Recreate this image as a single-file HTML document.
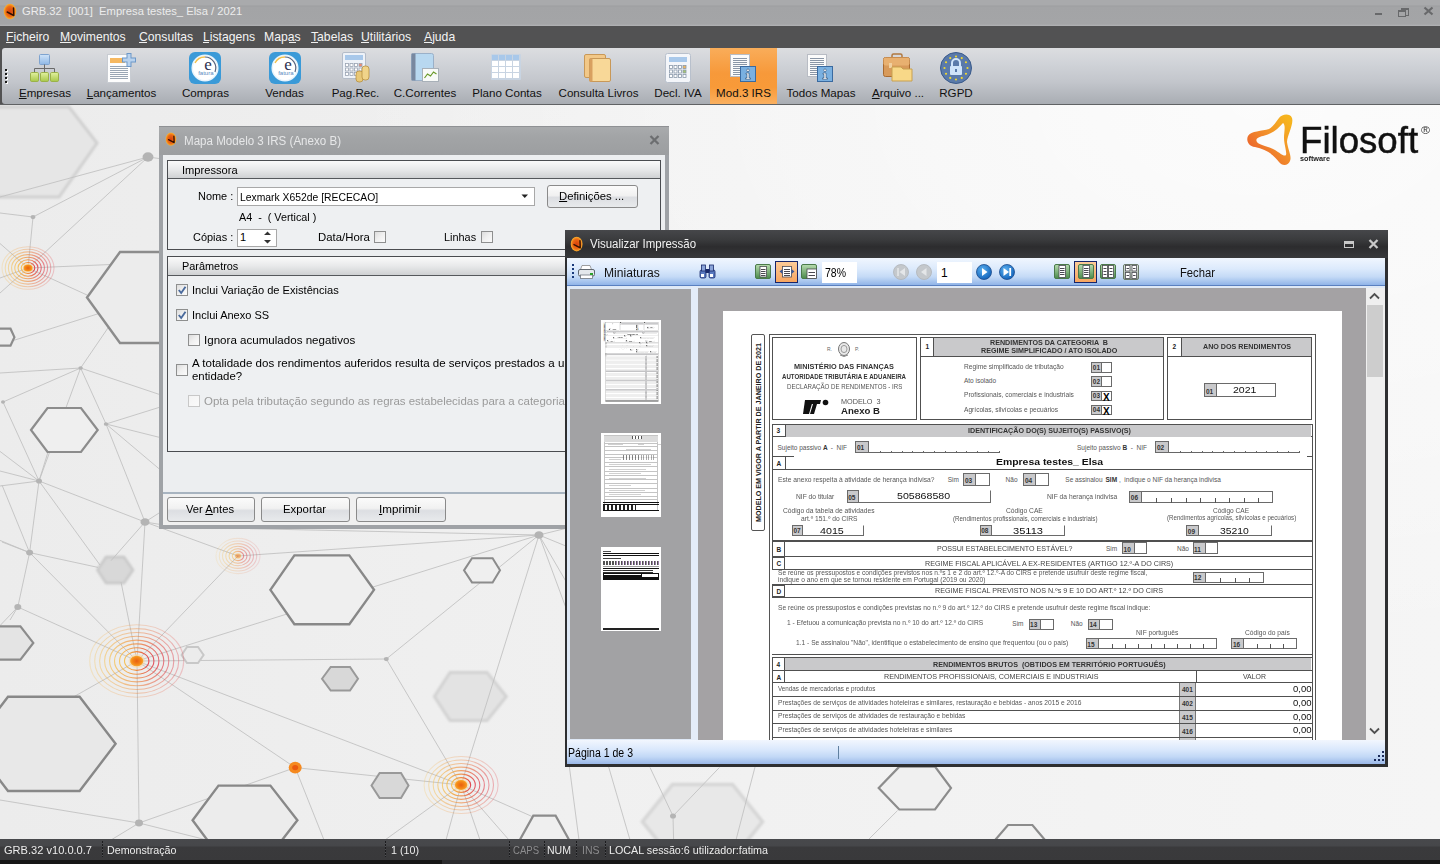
<!DOCTYPE html>
<html><head><meta charset="utf-8"><title>GRB.32</title><style>
*{margin:0;padding:0;box-sizing:content-box}
html,body{width:1440px;height:864px;overflow:hidden;background:#f0f0f0;font-family:"Liberation Sans",sans-serif;}
.t{position:absolute;white-space:nowrap;font-family:"Liberation Sans",sans-serif;}
.tl{font-size:11.6px;line-height:12px;color:#111;text-align:center;}
u{text-decoration:underline;text-underline-offset:1px;}
</style></head>
<body>
<svg style="position:absolute;left:0;top:105px" width="1440" height="734" viewBox="0 105 1440 734">
<defs><linearGradient id="dbg" x1="0" y1="0" x2="1" y2="0"><stop offset="0" stop-color="#ececec"/><stop offset="0.4" stop-color="#f0f0f0"/><stop offset="1" stop-color="#f5f5f5"/></linearGradient><radialGradient id="dhl" cx="0.85" cy="0" r="0.75" gradientTransform="translate(0.15,0) scale(0.85,1)"><stop offset="0" stop-color="#ffffff" stop-opacity="0.7"/><stop offset="0.6" stop-color="#ffffff" stop-opacity="0.3"/><stop offset="1" stop-color="#ffffff" stop-opacity="0"/></radialGradient><linearGradient id="pg" x1="0" y1="0" x2="1" y2="0"><stop offset="0" stop-color="#f6c050"/><stop offset="0.45" stop-color="#f08a30"/><stop offset="1" stop-color="#e03a48"/></linearGradient><radialGradient id="pd"><stop offset="0" stop-color="#e86010"/><stop offset="0.7" stop-color="#f58a18"/><stop offset="1" stop-color="#f8a830"/></radialGradient><filter id="bl" x="-20%" y="-20%" width="140%" height="140%"><feGaussianBlur stdDeviation="1.3"/></filter></defs>
<rect x="0" y="105" width="1440" height="734" fill="url(#dbg)"/><rect x="0" y="105" width="1440" height="734" fill="url(#dhl)"/>
<path d="M-60,152 L-30,107 L69,107 L97,143 L59,197 L-30,197 Z" fill="#e6e6e6" stroke="#d0d0d0" stroke-width="3" filter="url(#bl)"/>
<path d="M97.5,570.0 L106,557 L124,557 L133,570.0 L124,583 L106,583 Z" fill="#d8d8d8" stroke="#c8c8c8" stroke-width="2.5" filter="url(#bl)"/>
<path d="M434.4,696.5 L450,672.4 L487,672.4 L506.3,696.5 L487,720.6 L450,720.6 Z" fill="#e3e3e3" stroke="#d2d2d2" stroke-width="3" filter="url(#bl)"/>
<path d="M642.5,821.7 L672.5,784.4 L732.5,784.4 L762.5,821.7 L732.5,859 L672.5,859 Z" fill="#e8e8e8" stroke="#d6d6d6" stroke-width="3.5" filter="url(#bl)"/>
<line x1="148" y1="157" x2="0" y2="197" stroke="#c2c2c2" stroke-width="0.9"/>
<line x1="148" y1="157" x2="33" y2="217" stroke="#c2c2c2" stroke-width="0.9"/>
<line x1="148" y1="157" x2="28" y2="268" stroke="#c2c2c2" stroke-width="0.9"/>
<line x1="148" y1="157" x2="170" y2="160" stroke="#c2c2c2" stroke-width="0.9"/>
<line x1="0" y1="213" x2="33" y2="217" stroke="#c2c2c2" stroke-width="0.9"/>
<line x1="33" y1="217" x2="28" y2="268" stroke="#c2c2c2" stroke-width="0.9"/>
<line x1="28" y1="268" x2="0" y2="243.5" stroke="#c2c2c2" stroke-width="0.9"/>
<line x1="28" y1="268" x2="0" y2="278" stroke="#c2c2c2" stroke-width="0.9"/>
<line x1="28" y1="268" x2="0" y2="293" stroke="#c2c2c2" stroke-width="0.9"/>
<line x1="28" y1="268" x2="170" y2="262" stroke="#c2c2c2" stroke-width="0.9"/>
<line x1="28" y1="268" x2="87" y2="295" stroke="#c2c2c2" stroke-width="0.9"/>
<line x1="0" y1="344.7" x2="110" y2="310" stroke="#c2c2c2" stroke-width="0.9"/>
<line x1="80.6" y1="368" x2="0" y2="373" stroke="#c2c2c2" stroke-width="0.9"/>
<line x1="3" y1="402" x2="80.6" y2="368" stroke="#c2c2c2" stroke-width="0.9"/>
<line x1="80.6" y1="368" x2="110" y2="325" stroke="#c2c2c2" stroke-width="0.9"/>
<line x1="80.6" y1="368" x2="106" y2="424" stroke="#c2c2c2" stroke-width="0.9"/>
<line x1="80.6" y1="368" x2="39" y2="481" stroke="#c2c2c2" stroke-width="0.9"/>
<line x1="80.6" y1="368" x2="170" y2="398" stroke="#c2c2c2" stroke-width="0.9"/>
<line x1="106" y1="424" x2="170" y2="404" stroke="#c2c2c2" stroke-width="0.9"/>
<line x1="106" y1="424" x2="170" y2="440" stroke="#c2c2c2" stroke-width="0.9"/>
<line x1="106" y1="424" x2="170" y2="478" stroke="#c2c2c2" stroke-width="0.9"/>
<line x1="106" y1="424" x2="145" y2="522" stroke="#c2c2c2" stroke-width="0.9"/>
<line x1="3" y1="402" x2="39" y2="481" stroke="#c2c2c2" stroke-width="0.9"/>
<line x1="39" y1="481" x2="0" y2="451.4" stroke="#c2c2c2" stroke-width="0.9"/>
<line x1="39" y1="481" x2="0" y2="471" stroke="#c2c2c2" stroke-width="0.9"/>
<line x1="39" y1="481" x2="0" y2="486" stroke="#c2c2c2" stroke-width="0.9"/>
<line x1="39" y1="481" x2="48" y2="452" stroke="#c2c2c2" stroke-width="0.9"/>
<line x1="39" y1="481" x2="145" y2="522" stroke="#c2c2c2" stroke-width="0.9"/>
<line x1="39" y1="481" x2="100" y2="565" stroke="#c2c2c2" stroke-width="0.9"/>
<line x1="121" y1="582" x2="137" y2="661" stroke="#c2c2c2" stroke-width="0.9"/>
<line x1="17.8" y1="607" x2="10" y2="620" stroke="#c2c2c2" stroke-width="0.9"/>
<line x1="145" y1="522" x2="170" y2="506" stroke="#c2c2c2" stroke-width="0.9"/>
<line x1="145" y1="522" x2="170" y2="526" stroke="#c2c2c2" stroke-width="0.9"/>
<line x1="145" y1="522" x2="137" y2="661" stroke="#c2c2c2" stroke-width="0.9"/>
<line x1="145" y1="522" x2="111" y2="560.7" stroke="#c2c2c2" stroke-width="0.9"/>
<line x1="29.6" y1="552.6" x2="0" y2="540.4" stroke="#c2c2c2" stroke-width="0.9"/>
<line x1="39" y1="481" x2="29.6" y2="552.6" stroke="#c2c2c2" stroke-width="0.9"/>
<line x1="2" y1="485" x2="29.6" y2="552.6" stroke="#c2c2c2" stroke-width="0.9"/>
<line x1="2" y1="542" x2="29.6" y2="552.6" stroke="#c2c2c2" stroke-width="0.9"/>
<line x1="29.6" y1="552.6" x2="98" y2="567.4" stroke="#c2c2c2" stroke-width="0.9"/>
<line x1="29.6" y1="552.6" x2="17.8" y2="607" stroke="#c2c2c2" stroke-width="0.9"/>
<line x1="29.6" y1="552.6" x2="137" y2="661" stroke="#c2c2c2" stroke-width="0.9"/>
<line x1="17.8" y1="607" x2="0" y2="625.6" stroke="#c2c2c2" stroke-width="0.9"/>
<line x1="17.8" y1="607" x2="137" y2="661" stroke="#c2c2c2" stroke-width="0.9"/>
<line x1="238" y1="556" x2="137" y2="661" stroke="#c2c2c2" stroke-width="0.9"/>
<line x1="238" y1="556" x2="539" y2="535" stroke="#c2c2c2" stroke-width="0.9"/>
<line x1="238" y1="556" x2="145" y2="522" stroke="#c2c2c2" stroke-width="0.9"/>
<line x1="539" y1="535" x2="250" y2="528.7" stroke="#c2c2c2" stroke-width="0.9"/>
<line x1="539" y1="535" x2="137" y2="661" stroke="#c2c2c2" stroke-width="0.9"/>
<line x1="539" y1="535" x2="386.3" y2="659" stroke="#c2c2c2" stroke-width="0.9"/>
<line x1="539" y1="535" x2="461.1" y2="785" stroke="#c2c2c2" stroke-width="0.9"/>
<line x1="539" y1="535" x2="600" y2="560" stroke="#c2c2c2" stroke-width="0.9"/>
<line x1="539" y1="535" x2="600" y2="640" stroke="#c2c2c2" stroke-width="0.9"/>
<line x1="539" y1="535" x2="600" y2="520" stroke="#c2c2c2" stroke-width="0.9"/>
<line x1="539" y1="535" x2="600" y2="700" stroke="#c2c2c2" stroke-width="0.9"/>
<line x1="386.3" y1="659" x2="137" y2="661" stroke="#c2c2c2" stroke-width="0.9"/>
<line x1="386.3" y1="659" x2="461.1" y2="785" stroke="#c2c2c2" stroke-width="0.9"/>
<line x1="137" y1="661" x2="461.1" y2="785" stroke="#c2c2c2" stroke-width="0.9"/>
<line x1="295.2" y1="767.6" x2="461.1" y2="785" stroke="#c2c2c2" stroke-width="0.9"/>
<line x1="295.2" y1="767.6" x2="139" y2="823" stroke="#c2c2c2" stroke-width="0.9"/>
<line x1="295.2" y1="767.6" x2="324" y2="840" stroke="#c2c2c2" stroke-width="0.9"/>
<line x1="295.2" y1="767.6" x2="137" y2="661" stroke="#c2c2c2" stroke-width="0.9"/>
<line x1="137" y1="661" x2="0" y2="738.5" stroke="#c2c2c2" stroke-width="0.9"/>
<line x1="137" y1="661" x2="139" y2="823" stroke="#c2c2c2" stroke-width="0.9"/>
<line x1="139" y1="823" x2="111" y2="840" stroke="#c2c2c2" stroke-width="0.9"/>
<line x1="139" y1="823" x2="207" y2="840" stroke="#c2c2c2" stroke-width="0.9"/>
<line x1="139" y1="823" x2="0" y2="800" stroke="#c2c2c2" stroke-width="0.9"/>
<line x1="461.1" y1="785" x2="385" y2="840" stroke="#c2c2c2" stroke-width="0.9"/>
<line x1="461.1" y1="785" x2="446" y2="840" stroke="#c2c2c2" stroke-width="0.9"/>
<line x1="461.1" y1="785" x2="480" y2="840" stroke="#c2c2c2" stroke-width="0.9"/>
<line x1="461.1" y1="785" x2="509" y2="840" stroke="#c2c2c2" stroke-width="0.9"/>
<line x1="461.1" y1="785" x2="540" y2="820" stroke="#c2c2c2" stroke-width="0.9"/>
<line x1="650" y1="767.5" x2="673" y2="816" stroke="#c2c2c2" stroke-width="0.9"/>
<line x1="719.4" y1="767.5" x2="673" y2="816" stroke="#c2c2c2" stroke-width="0.9"/>
<line x1="673" y1="816" x2="673.6" y2="840" stroke="#c2c2c2" stroke-width="0.9"/>
<line x1="569.4" y1="767" x2="579" y2="840" stroke="#c2c2c2" stroke-width="0.9"/>
<line x1="608.7" y1="767" x2="630" y2="840" stroke="#c2c2c2" stroke-width="0.9"/>
<line x1="755" y1="767" x2="736" y2="840" stroke="#c2c2c2" stroke-width="0.9"/>
<line x1="897.5" y1="810.6" x2="868" y2="840" stroke="#c2c2c2" stroke-width="0.9"/>
<path d="M87,297.5 L120,252 L186,252 L219,297.5 L186,343 L120,343 Z" fill="#ececec" stroke="#8c8c8c" stroke-width="2.4"/>
<path d="M-20,337.15 L-6,328.7 L10.5,328.7 L14.4,337.15 L10.5,345.6 L-6,345.6 Z" fill="#ececec" stroke="#8c8c8c" stroke-width="2.2"/>
<path d="M31,430.0 L47.5,408 L81,408 L97.7,430.0 L81,452 L47.5,452 Z" fill="#efefef" stroke="#8c8c8c" stroke-width="2.2"/>
<path d="M270.4,589.8499999999999 L294.4,555.4 L349.3,555.4 L374,589.8499999999999 L349.3,624.3 L294.4,624.3 Z" fill="#efefef" stroke="#888888" stroke-width="2.4"/>
<path d="M464,570.3499999999999 L472,558.3 L492.6,558.3 L500,570.3499999999999 L492.6,582.4 L472,582.4 Z" fill="#efefef" stroke="#8c8c8c" stroke-width="2"/>
<path d="M181.6,655.0 L187,647 L198,647 L203.6,655.0 L198,663 L187,663 Z" fill="#ececec" stroke="#c8c8c8" stroke-width="2"/>
<path d="M322,678.75 L330.7,666.9 L350,666.9 L358,678.75 L350,690.6 L330.7,690.6 Z" fill="#d8d8d8" stroke="#999999" stroke-width="2"/>
<path d="M-36,642.95 L-10,626.3 L20.4,626.3 L33.3,642.95 L20.4,659.6 L-10,659.6 Z" fill="#e4e4e4" stroke="#8c8c8c" stroke-width="2.2"/>
<path d="M-28,743.85 L8,696.7 L79.6,696.7 L115.6,743.85 L79.6,791 L8,791 Z" fill="#e8e8e8" stroke="#888888" stroke-width="2.4"/>
<path d="M192.6,820.3 L218.5,785.6 L270.4,785.6 L297.4,820.3 L270.4,855 L218.5,855 Z" fill="#ececec" stroke="#888888" stroke-width="2.4"/>
<path d="M371.5,785.5 L379.6,773 L401,773 L408.5,785.5 L401,798 L379.6,798 Z" fill="#d8d8d8" stroke="#999999" stroke-width="2"/>
<path d="M520.4,838.85 L533.3,815.7 L555.6,815.7 L568.5,838.85 L555.6,862 L533.3,862 Z" fill="#efefef" stroke="#8c8c8c" stroke-width="2.2"/>
<path d="M878.7,788.1 L899.3,766.7 L935,766.7 L951,788.1 L935,809.5 L899.3,809.5 Z" fill="#f0f0f0" stroke="#8c8c8c" stroke-width="2.2"/>
<path d="M990,846.0 L1008,825 L1032.4,825 L1050,846.0 L1032.4,867 L1008,867 Z" fill="#f2f2f2" stroke="#8c8c8c" stroke-width="2.2"/>
<ellipse cx="148" cy="157" rx="5.5" ry="4.675" fill="#b4b4b4"/>
<ellipse cx="33" cy="217" rx="2.5" ry="2.125" fill="#b4b4b4"/>
<ellipse cx="80.6" cy="368" rx="2.2" ry="1.87" fill="#b4b4b4"/>
<ellipse cx="3" cy="402" rx="2" ry="1.7" fill="#b4b4b4"/>
<ellipse cx="106" cy="424" rx="2.2" ry="1.87" fill="#b4b4b4"/>
<ellipse cx="39" cy="481" rx="3" ry="2.55" fill="#b4b4b4"/>
<ellipse cx="145" cy="522" rx="4.5" ry="3.8249999999999997" fill="#b4b4b4"/>
<ellipse cx="29.6" cy="552.6" rx="3.5" ry="2.975" fill="#b4b4b4"/>
<ellipse cx="17.8" cy="607" rx="3.5" ry="2.975" fill="#b4b4b4"/>
<ellipse cx="539" cy="535" rx="4.5" ry="3.8249999999999997" fill="#b4b4b4"/>
<ellipse cx="386.3" cy="659" rx="2.5" ry="2.125" fill="#b4b4b4"/>
<ellipse cx="139" cy="823" rx="4" ry="3.4" fill="#b4b4b4"/>
<ellipse cx="673" cy="816" rx="3" ry="2.55" fill="#b4b4b4"/>
<ellipse cx="28" cy="268" rx="6.8" ry="5.5" fill="none" stroke="url(#pg)" stroke-width="1.1" opacity="0.95"/>
<ellipse cx="28" cy="268" rx="10.0" ry="8.2" fill="none" stroke="url(#pg)" stroke-width="1.1" opacity="0.83"/>
<ellipse cx="28" cy="268" rx="13.2" ry="10.8" fill="none" stroke="url(#pg)" stroke-width="1.1" opacity="0.72"/>
<ellipse cx="28" cy="268" rx="16.4" ry="13.4" fill="none" stroke="url(#pg)" stroke-width="1.1" opacity="0.60"/>
<ellipse cx="28" cy="268" rx="19.6" ry="16.1" fill="none" stroke="url(#pg)" stroke-width="1.1" opacity="0.48"/>
<ellipse cx="28" cy="268" rx="22.8" ry="18.7" fill="none" stroke="url(#pg)" stroke-width="1.1" opacity="0.37"/>
<ellipse cx="28" cy="268" rx="26.0" ry="21.3" fill="none" stroke="url(#pg)" stroke-width="1.1" opacity="0.25"/>
<ellipse cx="28" cy="268" rx="5.6" ry="4.7" fill="#fbd7a0" opacity="0.6"/>
<ellipse cx="28" cy="268" rx="4.5" ry="3.6" fill="url(#pd)"/>
<g opacity="0.55"><ellipse cx="238" cy="556" rx="5.7" ry="4.6" fill="none" stroke="url(#pg)" stroke-width="1.1" opacity="0.95"/>
<ellipse cx="238" cy="556" rx="9.0" ry="7.2" fill="none" stroke="url(#pg)" stroke-width="1.1" opacity="0.81"/>
<ellipse cx="238" cy="556" rx="12.2" ry="9.8" fill="none" stroke="url(#pg)" stroke-width="1.1" opacity="0.67"/>
<ellipse cx="238" cy="556" rx="15.5" ry="12.4" fill="none" stroke="url(#pg)" stroke-width="1.1" opacity="0.53"/>
<ellipse cx="238" cy="556" rx="18.7" ry="15.0" fill="none" stroke="url(#pg)" stroke-width="1.1" opacity="0.39"/>
<ellipse cx="238" cy="556" rx="22.0" ry="17.6" fill="none" stroke="url(#pg)" stroke-width="1.1" opacity="0.25"/>
<ellipse cx="238" cy="556" rx="3.8" ry="3.2" fill="#fbd7a0" opacity="0.6"/>
<ellipse cx="238" cy="556" rx="3" ry="2.4" fill="url(#pd)"/></g>
<ellipse cx="136.7" cy="661" rx="12.2" ry="9.4" fill="none" stroke="url(#pg)" stroke-width="1.1" opacity="0.95"/>
<ellipse cx="136.7" cy="661" rx="17.2" ry="13.2" fill="none" stroke="url(#pg)" stroke-width="1.1" opacity="0.85"/>
<ellipse cx="136.7" cy="661" rx="22.2" ry="17.1" fill="none" stroke="url(#pg)" stroke-width="1.1" opacity="0.75"/>
<ellipse cx="136.7" cy="661" rx="27.1" ry="20.9" fill="none" stroke="url(#pg)" stroke-width="1.1" opacity="0.65"/>
<ellipse cx="136.7" cy="661" rx="32.1" ry="24.7" fill="none" stroke="url(#pg)" stroke-width="1.1" opacity="0.55"/>
<ellipse cx="136.7" cy="661" rx="37.1" ry="28.5" fill="none" stroke="url(#pg)" stroke-width="1.1" opacity="0.45"/>
<ellipse cx="136.7" cy="661" rx="42.0" ry="32.4" fill="none" stroke="url(#pg)" stroke-width="1.1" opacity="0.35"/>
<ellipse cx="136.7" cy="661" rx="47.0" ry="36.2" fill="none" stroke="url(#pg)" stroke-width="1.1" opacity="0.25"/>
<ellipse cx="136.7" cy="661" rx="8.2" ry="6.9" fill="#fbd7a0" opacity="0.6"/>
<ellipse cx="136.7" cy="661" rx="6.6" ry="5.3" fill="url(#pd)"/>
<ellipse cx="461.1" cy="785" rx="9.6" ry="7.4" fill="none" stroke="url(#pg)" stroke-width="1.1" opacity="0.95"/>
<ellipse cx="461.1" cy="785" rx="14.2" ry="10.9" fill="none" stroke="url(#pg)" stroke-width="1.1" opacity="0.83"/>
<ellipse cx="461.1" cy="785" rx="18.7" ry="14.4" fill="none" stroke="url(#pg)" stroke-width="1.1" opacity="0.72"/>
<ellipse cx="461.1" cy="785" rx="23.3" ry="17.9" fill="none" stroke="url(#pg)" stroke-width="1.1" opacity="0.60"/>
<ellipse cx="461.1" cy="785" rx="27.9" ry="21.5" fill="none" stroke="url(#pg)" stroke-width="1.1" opacity="0.48"/>
<ellipse cx="461.1" cy="785" rx="32.4" ry="25.0" fill="none" stroke="url(#pg)" stroke-width="1.1" opacity="0.37"/>
<ellipse cx="461.1" cy="785" rx="37.0" ry="28.5" fill="none" stroke="url(#pg)" stroke-width="1.1" opacity="0.25"/>
<ellipse cx="461.1" cy="785" rx="7.8" ry="6.5" fill="#fbd7a0" opacity="0.6"/>
<ellipse cx="461.1" cy="785" rx="6.2" ry="5.0" fill="url(#pd)"/>
<ellipse cx="295.2" cy="767.6" rx="6.5" ry="5.8" fill="#f58a20"/><ellipse cx="295.2" cy="767.6" rx="3" ry="2.6" fill="#ea5a10"/>
</svg>
<svg style="position:absolute;left:1242px;top:110px" width="60" height="60" viewBox="0 0 60 60">
<defs><linearGradient id="lg" x1="0.85" y1="0.05" x2="0.15" y2="0.75"><stop offset="0" stop-color="#f6b41e"/><stop offset="0.5" stop-color="#f2922a"/><stop offset="1" stop-color="#ec662c"/></linearGradient></defs>
<path d="M37 8 C40 4,48 3,50 8 C52 14,45 26,45 32 C46 40,50 46,48 51 C46 56,40 56,37 52 C32 45,24 39,13 37 C6 36,4 30,6 26 C9 21,20 21,27 19 C31 17,34 12,37 8 Z M41 13 C36 19,30 24,21 26 C16 27,13 29,15 32 C17 35,26 36,33 40 C38 43,42 47,44 45 C45 42,42 34,42 28 C42 22,44 15,41 13 Z" fill="url(#lg)" fill-rule="evenodd"/>
</svg><div class="t" style="left:1299.70px;top:121.68px;font-size:37px;line-height:37px;color:#111;transform:scaleX(0.9904);transform-origin:0 0;-webkit-text-stroke:0.5px #111;">Filosoft</div><div class="t" style="left:1300.00px;top:155.15px;font-size:7.5px;line-height:7.5px;font-weight:bold;color:#222;transform:scaleX(0.9728);transform-origin:0 0;">software</div><div class="t" style="left:1420.50px;top:125.19px;font-size:11px;line-height:11px;color:#333;transform:scaleX(1.1103);transform-origin:0 0;">®</div>
<div style="position:absolute;left:0;top:0;width:1440px;height:26px;background:linear-gradient(#a9aaac 0px,#a9aaac 5px,#9d9ea0 6px,#a3a4a6 7px,#a4a5a7 24px,#b3b4b6 26px);"></div>
<svg style="position:absolute;left:3px;top:3px" width="14.0" height="17.0" viewBox="0 0 14 17"><defs><radialGradient id="aig" cx="0.5" cy="0.5" r="0.55"><stop offset="0" stop-color="#d8400c"/><stop offset="0.6" stop-color="#ec6a14"/><stop offset="0.85" stop-color="#f7a62a"/><stop offset="1" stop-color="#f8c050" stop-opacity="0.6"/></radialGradient></defs><ellipse cx="7" cy="8.5" rx="6.3" ry="7.8" fill="url(#aig)"/><path d="M10.5 5 L10.8 12.5 M4.2 9 L10.8 12.5" stroke="#200800" stroke-width="1.5" stroke-linecap="round" opacity="0.9"/></svg>
<div class="t" style="left:22px;top:4.5px;font-size:11.2px;color:#ececec;word-spacing:0px;">GRB.32&nbsp;&nbsp;[001]&nbsp;&nbsp;Empresa testes_ Elsa / 2021</div>
<div style="position:absolute;left:1375px;top:13px;width:7px;height:2px;background:#68696b"></div>
<div style="position:absolute;left:1401px;top:8px;width:6px;height:5px;border:1.5px solid #68696b;border-top-width:2px;"></div>
<div style="position:absolute;left:1398px;top:10px;width:6px;height:4px;border:1.5px solid #68696b;border-top-width:2px;background:#a4a5a7"></div>
<svg style="position:absolute;left:1423px;top:6px" width="11" height="10"><path d="M1.5 1.5 L9.5 8.5 M9.5 1.5 L1.5 8.5" stroke="#68696b" stroke-width="2.2"/></svg>
<div style="position:absolute;left:0;top:26px;width:1440px;height:22px;background:#525253;"></div>
<div class="t" style="left:6px;top:30px;font-size:12.2px;color:#f4f4f4;">Ficheiro</div>
<div class="t" style="left:60px;top:30px;font-size:12.2px;color:#f4f4f4;">Movimentos</div>
<div class="t" style="left:139px;top:30px;font-size:12.2px;color:#f4f4f4;">Consultas</div>
<div class="t" style="left:203px;top:30px;font-size:12.2px;color:#f4f4f4;">Listagens</div>
<div class="t" style="left:264px;top:30px;font-size:12.2px;color:#f4f4f4;">Mapas</div>
<div class="t" style="left:311px;top:30px;font-size:12.2px;color:#f4f4f4;">Tabelas</div>
<div class="t" style="left:361px;top:30px;font-size:12.2px;color:#f4f4f4;">Utilitários</div>
<div class="t" style="left:424px;top:30px;font-size:12.2px;color:#f4f4f4;">Ajuda</div>
<div style="position:absolute;left:6px;top:42px;width:8px;height:1px;background:#f0f0f0"></div>
<div style="position:absolute;left:60px;top:42px;width:11px;height:1px;background:#f0f0f0"></div>
<div style="position:absolute;left:139px;top:42px;width:8px;height:1px;background:#f0f0f0"></div>
<div style="position:absolute;left:203px;top:42px;width:6px;height:1px;background:#f0f0f0"></div>
<div style="position:absolute;left:289px;top:42px;width:7px;height:1px;background:#f0f0f0"></div>
<div style="position:absolute;left:311px;top:42px;width:7px;height:1px;background:#f0f0f0"></div>
<div style="position:absolute;left:361px;top:42px;width:8px;height:1px;background:#f0f0f0"></div>
<div style="position:absolute;left:424px;top:42px;width:8px;height:1px;background:#f0f0f0"></div>
<div style="position:absolute;left:0;top:47px;width:1440px;height:58px;background:#525253"></div>
<div style="position:absolute;left:2px;top:48px;width:1438px;height:56px;border-radius:3px 0 0 3px;background:linear-gradient(#dcdde0 0%,#cfd2d7 30%,#c3c6cc 60%,#a9adb3 100%);"></div>
<div style="position:absolute;left:0;top:104px;width:1440px;height:1px;background:#606264"></div>
<div style="position:absolute;left:5px;top:69px;width:2px;height:2px;background:#1a1a1a;box-shadow:1px 1px 0 #fff"></div>
<div style="position:absolute;left:5px;top:73px;width:2px;height:2px;background:#1a1a1a;box-shadow:1px 1px 0 #fff"></div>
<div style="position:absolute;left:5px;top:77px;width:2px;height:2px;background:#1a1a1a;box-shadow:1px 1px 0 #fff"></div>
<div style="position:absolute;left:5px;top:81px;width:2px;height:2px;background:#1a1a1a;box-shadow:1px 1px 0 #fff"></div>
<div style="position:absolute;left:710px;top:48px;width:67px;height:56px;background:linear-gradient(#f9ad5a 0%,#f7993a 45%,#f89a38 70%,#fab060 100%);"></div>
<svg style="position:absolute;left:29px;top:52px" width="32" height="32" viewBox="0 0 32 32">
<defs><linearGradient id="gb" x1="0" y1="0" x2="0" y2="1"><stop offset="0" stop-color="#cfe3f8"/><stop offset="1" stop-color="#8fb8e6"/></linearGradient>
<linearGradient id="gg" x1="0" y1="0" x2="0" y2="1"><stop offset="0" stop-color="#e2f0a0"/><stop offset="1" stop-color="#a8c84a"/></linearGradient></defs>
<rect x="10.5" y="2.5" width="10" height="10" rx="1" fill="url(#gb)" stroke="#7ea3cf"/>
<path d="M15.5 12.5v4M5.5 20v-3.5h20V20M15.5 16.5V20" stroke="#6a6a6a" fill="none"/>
<rect x="1.5" y="20.5" width="8" height="9" rx="1.2" fill="url(#gg)" stroke="#9ab24a"/>
<rect x="11.5" y="20.5" width="8" height="9" rx="1.2" fill="url(#gg)" stroke="#9ab24a"/>
<rect x="21.5" y="20.5" width="8" height="9" rx="1.2" fill="url(#gg)" stroke="#9ab24a"/>
</svg>
<div class="t tl" style="left:10px;width:70px;top:87px;"><u>E</u>mpresas</div>
<svg style="position:absolute;left:106px;top:52px" width="32" height="32" viewBox="0 0 32 32">
<rect x="1.5" y="2.5" width="23" height="28" fill="#fdfdfd" stroke="#c8ccd2"/>
<rect x="4" y="6" width="15" height="5" fill="#f6b860"/>
<path d="M4 14.5h18" stroke="#9aa6b4" stroke-width="1"/><path d="M4 16.5h18" stroke="#9aa6b4" stroke-width="1"/><path d="M4 18.5h18" stroke="#9aa6b4" stroke-width="1"/><path d="M4 20.5h18" stroke="#9aa6b4" stroke-width="1"/><path d="M4 22.5h18" stroke="#9aa6b4" stroke-width="1"/><path d="M4 24.5h18" stroke="#9aa6b4" stroke-width="1"/><path d="M4 26.5h18" stroke="#9aa6b4" stroke-width="1"/>
<path d="M23 1v14M16 8h14" stroke="#6d98c8" stroke-width="5"/>
<path d="M23 2v12M17 8h12" stroke="#b8d2ee" stroke-width="3"/>
</svg>
<div class="t tl" style="left:76px;width:91px;top:87px;"><u>L</u>ançamentos</div>
<svg style="position:absolute;left:189px;top:52px" width="32" height="32" viewBox="0 0 32 32">
<rect x="0" y="0" width="32" height="32" rx="6" fill="#3a9ad8"/>
<circle cx="16" cy="16" r="12.8" fill="#fff" stroke="#e8f4fc" stroke-width="1.5"/>
<path d="M6 11 A11 11 0 0 1 16 5" stroke="#f2c04a" stroke-width="1.3" fill="none"/>
<path d="M16 5 A11 11 0 0 1 26 20" stroke="#3a4a6a" stroke-width="1.2" fill="none" opacity=".85"/>
<text x="19" y="17.5" font-family="Liberation Serif" font-size="17" text-anchor="middle" fill="#2c3050">e</text>
<text x="16.8" y="22.5" font-family="Liberation Sans" font-size="6" text-anchor="middle" fill="#5a8ac0">fatura</text>
</svg>
<div class="t tl" style="left:172px;width:67px;top:87px;">Compras</div>
<svg style="position:absolute;left:269px;top:52px" width="32" height="32" viewBox="0 0 32 32">
<rect x="0" y="0" width="32" height="32" rx="6" fill="#3a9ad8"/>
<circle cx="16" cy="16" r="12.8" fill="#fff" stroke="#e8f4fc" stroke-width="1.5"/>
<path d="M6 11 A11 11 0 0 1 16 5" stroke="#f2c04a" stroke-width="1.3" fill="none"/>
<path d="M16 5 A11 11 0 0 1 26 20" stroke="#3a4a6a" stroke-width="1.2" fill="none" opacity=".85"/>
<text x="19" y="17.5" font-family="Liberation Serif" font-size="17" text-anchor="middle" fill="#2c3050">e</text>
<text x="16.8" y="22.5" font-family="Liberation Sans" font-size="6" text-anchor="middle" fill="#5a8ac0">fatura</text>
</svg>
<div class="t tl" style="left:256px;width:57px;top:87px;">Vendas</div>
<svg style="position:absolute;left:342px;top:52px" width="28" height="31" viewBox="0 0 28 31">
<rect x="0.5" y="0.5" width="23" height="26" rx="1.5" fill="#eef2f8" stroke="#b4bcc8"/>
<rect x="3" y="3" width="18" height="5" fill="#a8c8ea"/>
<rect x="3.5" y="11.5" width="3" height="3" fill="#fff" stroke="#9aa4b2" stroke-width=".8"/><rect x="8.0" y="11.5" width="3" height="3" fill="#fff" stroke="#9aa4b2" stroke-width=".8"/><rect x="12.5" y="11.5" width="3" height="3" fill="#fff" stroke="#9aa4b2" stroke-width=".8"/><rect x="17.0" y="11.5" width="3" height="3" fill="#f08a70" stroke="#9aa4b2" stroke-width=".8"/><rect x="3.5" y="16.0" width="3" height="3" fill="#fff" stroke="#9aa4b2" stroke-width=".8"/><rect x="8.0" y="16.0" width="3" height="3" fill="#fff" stroke="#9aa4b2" stroke-width=".8"/><rect x="12.5" y="16.0" width="3" height="3" fill="#fff" stroke="#9aa4b2" stroke-width=".8"/><rect x="17.0" y="16.0" width="3" height="3" fill="#fff" stroke="#9aa4b2" stroke-width=".8"/><rect x="3.5" y="20.5" width="3" height="3" fill="#fff" stroke="#9aa4b2" stroke-width=".8"/><rect x="8.0" y="20.5" width="3" height="3" fill="#fff" stroke="#9aa4b2" stroke-width=".8"/><rect x="12.5" y="20.5" width="3" height="3" fill="#fff" stroke="#9aa4b2" stroke-width=".8"/><rect x="17.0" y="20.5" width="3" height="3" fill="#fff" stroke="#9aa4b2" stroke-width=".8"/>
<rect x="14" y="19" width="7" height="11" rx="3" fill="#e8c878" stroke="#b89040" stroke-width=".8"/>
<rect x="20" y="14" width="7" height="14" rx="3" fill="#f0d48a" stroke="#b89040" stroke-width=".8"/>
</svg>
<div class="t tl" style="left:323px;width:65px;top:87px;">Pag.Rec.</div>
<svg style="position:absolute;left:411px;top:53px" width="28" height="30" viewBox="0 0 28 30">
<rect x="0.5" y="0.5" width="22" height="27" rx="2" fill="#b8d8f0" stroke="#9ab0c8"/>
<rect x="0.5" y="0.5" width="4" height="27" fill="#7888a0"/>
<rect x="11.5" y="15.5" width="16" height="13" fill="#f8faf8" stroke="#a8b0b8"/>
<path d="M13.5 25l3-4 3 2 3-4 3 2" stroke="#6a9a2a" stroke-width="1.2" fill="none"/>
</svg>
<div class="t tl" style="left:384px;width:82px;top:87px;">C.Correntes</div>
<svg style="position:absolute;left:491px;top:54px" width="30" height="26" viewBox="0 0 30 26">
<rect x="0" y="0" width="30" height="26" rx="1" fill="#c8d4e2"/>
<rect x="1" y="1" width="6" height="5" fill="#a8c8ea"/><rect x="8" y="1" width="6" height="5" fill="#a8c8ea"/><rect x="15" y="1" width="6" height="5" fill="#a8c8ea"/><rect x="22" y="1" width="6" height="5" fill="#a8c8ea"/><rect x="1" y="7" width="6" height="5" fill="#ffffff"/><rect x="8" y="7" width="6" height="5" fill="#ffffff"/><rect x="15" y="7" width="6" height="5" fill="#ffffff"/><rect x="22" y="7" width="6" height="5" fill="#ffffff"/><rect x="1" y="13" width="6" height="5" fill="#ffffff"/><rect x="8" y="13" width="6" height="5" fill="#ffffff"/><rect x="15" y="13" width="6" height="5" fill="#ffffff"/><rect x="22" y="13" width="6" height="5" fill="#ffffff"/><rect x="1" y="19" width="6" height="5" fill="#ffffff"/><rect x="8" y="19" width="6" height="5" fill="#ffffff"/><rect x="15" y="19" width="6" height="5" fill="#ffffff"/><rect x="22" y="19" width="6" height="5" fill="#ffffff"/>
</svg>
<div class="t tl" style="left:462px;width:90px;top:87px;">Plano Contas</div>
<svg style="position:absolute;left:584px;top:54px" width="28" height="28" viewBox="0 0 28 28">
<rect x="0.5" y="0.5" width="21" height="23" rx="1.5" fill="#f2c888" stroke="#c89858"/>
<rect x="5.5" y="4.5" width="21" height="23" rx="1.5" fill="#f8d898" stroke="#c89858"/>
<rect x="5.5" y="4.5" width="3" height="23" fill="#d8a060"/>
</svg>
<div class="t tl" style="left:549px;width:99px;top:87px;">Consulta Livros</div>
<svg style="position:absolute;left:665px;top:53px" width="26" height="30" viewBox="0 0 26 30">
<rect x="0.5" y="0.5" width="25" height="29" rx="2" fill="#f4f6fa" stroke="#b8c0cc"/>
<rect x="4" y="4" width="18" height="5" fill="#a8c8ea"/>
<rect x="4.5" y="12.5" width="3" height="3" fill="#fff" stroke="#8a98aa" stroke-width=".8"/><rect x="9.0" y="12.5" width="3" height="3" fill="#fff" stroke="#8a98aa" stroke-width=".8"/><rect x="13.5" y="12.5" width="3" height="3" fill="#fff" stroke="#8a98aa" stroke-width=".8"/><rect x="18.0" y="12.5" width="3" height="3" fill="#f0b860" stroke="#8a98aa" stroke-width=".8"/><rect x="4.5" y="17.0" width="3" height="3" fill="#fff" stroke="#8a98aa" stroke-width=".8"/><rect x="9.0" y="17.0" width="3" height="3" fill="#fff" stroke="#8a98aa" stroke-width=".8"/><rect x="13.5" y="17.0" width="3" height="3" fill="#fff" stroke="#8a98aa" stroke-width=".8"/><rect x="18.0" y="17.0" width="3" height="3" fill="#a8c870" stroke="#8a98aa" stroke-width=".8"/><rect x="4.5" y="21.5" width="3" height="3" fill="#fff" stroke="#8a98aa" stroke-width=".8"/><rect x="9.0" y="21.5" width="3" height="3" fill="#fff" stroke="#8a98aa" stroke-width=".8"/><rect x="13.5" y="21.5" width="3" height="3" fill="#fff" stroke="#8a98aa" stroke-width=".8"/><rect x="18.0" y="21.5" width="3" height="3" fill="#fff" stroke="#8a98aa" stroke-width=".8"/>
</svg>
<div class="t tl" style="left:645px;width:66px;top:87px;">Decl. IVA</div>
<svg style="position:absolute;left:730px;top:54px" width="26" height="28" viewBox="0 0 26 28">
<rect x="0.5" y="0.5" width="19" height="22" fill="#fbfbfb" stroke="#b8bcc4"/>
<path d="M3 4.5h14" stroke="#8a96a6" stroke-width="1"/><path d="M3 6.5h14" stroke="#8a96a6" stroke-width="1"/><path d="M3 8.5h14" stroke="#8a96a6" stroke-width="1"/><path d="M3 10.5h14" stroke="#8a96a6" stroke-width="1"/><path d="M3 12.5h14" stroke="#8a96a6" stroke-width="1"/><path d="M3 14.5h14" stroke="#8a96a6" stroke-width="1"/><path d="M3 16.5h14" stroke="#8a96a6" stroke-width="1"/><path d="M3 18.5h14" stroke="#8a96a6" stroke-width="1"/><path d="M3 20.5h14" stroke="#8a96a6" stroke-width="1"/>
<rect x="10.5" y="12.5" width="15" height="15" fill="#7ab0e0" stroke="#3a6aa0"/>
<circle cx="18" cy="16.3" r="1.3" fill="#fff" stroke="#2a4a70" stroke-width=".6"/>
<path d="M16 19h3v5h1.5v1.2h-5v-1.2h1.5v-3.8H16z" fill="#fff" stroke="#2a4a70" stroke-width=".6"/>
</svg>
<div class="t tl" style="left:707px;width:73px;top:87px;">Mod.3 IRS</div>
<svg style="position:absolute;left:807px;top:54px" width="26" height="28" viewBox="0 0 26 28">
<rect x="0.5" y="0.5" width="19" height="22" fill="#fbfbfb" stroke="#b8bcc4"/>
<path d="M3 4.5h14" stroke="#8a96a6" stroke-width="1"/><path d="M3 6.5h14" stroke="#8a96a6" stroke-width="1"/><path d="M3 8.5h14" stroke="#8a96a6" stroke-width="1"/><path d="M3 10.5h14" stroke="#8a96a6" stroke-width="1"/><path d="M3 12.5h14" stroke="#8a96a6" stroke-width="1"/><path d="M3 14.5h14" stroke="#8a96a6" stroke-width="1"/><path d="M3 16.5h14" stroke="#8a96a6" stroke-width="1"/><path d="M3 18.5h14" stroke="#8a96a6" stroke-width="1"/><path d="M3 20.5h14" stroke="#8a96a6" stroke-width="1"/>
<rect x="10.5" y="12.5" width="15" height="15" fill="#7ab0e0" stroke="#3a6aa0"/>
<circle cx="18" cy="16.3" r="1.3" fill="#fff" stroke="#2a4a70" stroke-width=".6"/>
<path d="M16 19h3v5h1.5v1.2h-5v-1.2h1.5v-3.8H16z" fill="#fff" stroke="#2a4a70" stroke-width=".6"/>
</svg>
<div class="t tl" style="left:777px;width:88px;top:87px;">Todos Mapas</div>
<svg style="position:absolute;left:883px;top:52px" width="30" height="30" viewBox="0 0 30 30">
<path d="M9 6V3.5Q9 2 10.5 2h7Q19 2 19 3.5V6" stroke="#b07840" stroke-width="1.5" fill="none"/>
<rect x="0.5" y="5.5" width="26" height="19" rx="2" fill="#d89a5a" stroke="#a86a30"/>
<rect x="0.5" y="5.5" width="26" height="8" rx="2" fill="#e8b070"/>
<rect x="6" y="11" width="3" height="5" fill="#f0d0a0"/>
<path d="M9 15h9l2 2h9v12H9z" fill="#f8d888" stroke="#c8a050"/>
</svg>
<div class="t tl" style="left:861px;width:74px;top:87px;"><u>A</u>rquivo ...</div>
<svg style="position:absolute;left:940px;top:52px" width="32" height="32" viewBox="0 0 32 32">
<circle cx="16" cy="16" r="15.5" fill="#5a7aaa" stroke="#3a5a8a"/>
<circle cx="27.50" cy="16.00" r="1.1" fill="#f0d830"/><circle cx="25.96" cy="21.75" r="1.1" fill="#f0d830"/><circle cx="21.75" cy="25.96" r="1.1" fill="#f0d830"/><circle cx="16.00" cy="27.50" r="1.1" fill="#f0d830"/><circle cx="10.25" cy="25.96" r="1.1" fill="#f0d830"/><circle cx="6.04" cy="21.75" r="1.1" fill="#f0d830"/><circle cx="4.50" cy="16.00" r="1.1" fill="#f0d830"/><circle cx="6.04" cy="10.25" r="1.1" fill="#f0d830"/><circle cx="10.25" cy="6.04" r="1.1" fill="#f0d830"/><circle cx="16.00" cy="4.50" r="1.1" fill="#f0d830"/><circle cx="21.75" cy="6.04" r="1.1" fill="#f0d830"/><circle cx="25.96" cy="10.25" r="1.1" fill="#f0d830"/>
<path d="M12 14v-3a4 4 0 0 1 8 0v3" stroke="#cfe4fa" stroke-width="2" fill="none"/>
<rect x="10" y="14" width="12" height="9" rx="1" fill="#cfe4fa"/>
<rect x="15" y="17" width="2" height="3" fill="#5a7aaa"/>
</svg>
<div class="t tl" style="left:932px;width:48px;top:87px;">RGPD</div>
<div style="position:absolute;left:159.00px;top:126.00px;width:510.00px;height:403.00px;background:#9fa2a6;"></div>
<div style="position:absolute;left:159.00px;top:126.00px;width:510.00px;height:29.00px;background:linear-gradient(#a9abad 0%,#a2a4a6 40%,#9c9ea0 100%);"></div>
<div style="position:absolute;left:159.00px;top:126.00px;width:510.00px;height:1.00px;background:#8f9194;"></div>
<svg style="position:absolute;left:165px;top:132px" width="11.9" height="14.4" viewBox="0 0 14 17"><defs><radialGradient id="aig" cx="0.5" cy="0.5" r="0.55"><stop offset="0" stop-color="#d8400c"/><stop offset="0.6" stop-color="#ec6a14"/><stop offset="0.85" stop-color="#f7a62a"/><stop offset="1" stop-color="#f8c050" stop-opacity="0.6"/></radialGradient></defs><ellipse cx="7" cy="8.5" rx="6.3" ry="7.8" fill="url(#aig)"/><path d="M10.5 5 L10.8 12.5 M4.2 9 L10.8 12.5" stroke="#200800" stroke-width="1.5" stroke-linecap="round" opacity="0.9"/></svg>
<div class="t" style="left:184.00px;top:134.84px;font-size:12px;line-height:12px;color:#e6e7e8;transform:scaleX(0.9648);transform-origin:0 0;">Mapa Modelo 3 IRS (Anexo B)</div>
<svg style="position:absolute;left:649px;top:135px" width="11" height="10"><path d="M1.5 1 L9.5 9 M9.5 1 L1.5 9" stroke="#6c6e70" stroke-width="2.3"/></svg>
<div style="position:absolute;left:163.00px;top:155.00px;width:502.00px;height:370.00px;background:#eceef0;"></div>
<div style="position:absolute;left:163.00px;top:493.00px;width:502.00px;height:32.00px;background:#f0f0f0;"></div>
<div style="position:absolute;left:163.00px;top:492.00px;width:502.00px;height:2.00px;background:#a8b4c0;"></div>
<div style="position:absolute;left:167.00px;top:160.00px;width:494.00px;height:90.00px;box-sizing:border-box;border:1px solid #4a4c50;background:#eef0f2;"></div>
<div style="position:absolute;left:168.00px;top:161.00px;width:492.00px;height:17.00px;background:linear-gradient(#fafafa 0%,#e8e9ea 50%,#cfd1d3 100%);border-bottom:1px solid #55585c;"></div>
<div class="t" style="left:182.00px;top:164.69px;font-size:11px;line-height:11px;color:#000;transform:scaleX(1.0107);transform-origin:0 0;">Impressora</div>
<div class="t" style="left:198.30px;top:190.69px;font-size:11px;line-height:11px;color:#000;transform:scaleX(0.9957);transform-origin:0 0;">Nome :</div>
<div style="position:absolute;left:237.00px;top:187.00px;width:298.00px;height:19.00px;box-sizing:border-box;border:1px solid #a8a8a8;background:#fff;"></div>
<div class="t" style="left:240.30px;top:191.69px;font-size:11px;line-height:11px;color:#000;transform:scaleX(0.9412);transform-origin:0 0;">Lexmark X652de [RECECAO]</div>
<svg style="position:absolute;left:521px;top:194px" width="8" height="5"><path d="M0.5 0.5 L7 0.5 L3.75 4 Z" fill="#222"/></svg>
<div style="position:absolute;left:547.00px;top:185.00px;width:91.00px;height:23.00px;box-sizing:border-box;border:1px solid #8a8a8a;border-radius:3px;background:linear-gradient(#fbfbfb 0%,#f1f1f1 45%,#dcdee2 55%,#e8eaec 100%);"></div><div class="t" style="left:559.4px;top:191.19px;font-size:11px;line-height:11px;color:#000;transform:scaleX(1.0255);transform-origin:0 0"><u>D</u>efinições ...</div>
<div class="t" style="left:239.40px;top:211.99px;font-size:11px;line-height:11px;color:#000;transform:scaleX(0.9804);transform-origin:0 0;white-space:pre;">A4  -  ( Vertical )</div>
<div class="t" style="left:193.40px;top:232.39px;font-size:11px;line-height:11px;color:#000;transform:scaleX(0.9963);transform-origin:0 0;">Cópias :</div>
<div style="position:absolute;left:237.00px;top:228.50px;width:40.00px;height:18.50px;box-sizing:border-box;border:1px solid #a8a8a8;background:#fff;"></div>
<div class="t" style="left:240.00px;top:232.19px;font-size:11px;line-height:11px;color:#000;">1</div>
<svg style="position:absolute;left:263px;top:230px" width="9" height="15"><path d="M1 5 L4.5 1.5 L8 5 Z M1 10 L4.5 13.5 L8 10 Z" fill="#333"/></svg>
<div class="t" style="left:317.60px;top:232.29px;font-size:11px;line-height:11px;color:#000;transform:scaleX(1.0333);transform-origin:0 0;">Data/Hora</div>
<div style="position:absolute;left:374px;top:231px;width:10px;height:10px;border:1px solid #8e8f8f;background:linear-gradient(135deg,#dcdcdc 0%,#f0f0f0 50%,#fbfbfb 100%);box-sizing:content-box;"></div>
<div class="t" style="left:444.40px;top:232.29px;font-size:11px;line-height:11px;color:#000;transform:scaleX(0.9904);transform-origin:0 0;">Linhas</div>
<div style="position:absolute;left:481px;top:231px;width:10px;height:10px;border:1px solid #8e8f8f;background:linear-gradient(135deg,#dcdcdc 0%,#f0f0f0 50%,#fbfbfb 100%);box-sizing:content-box;"></div>
<div style="position:absolute;left:167.00px;top:256.00px;width:494.00px;height:196.00px;box-sizing:border-box;border:1px solid #4a4c50;background:#eef0f2;"></div>
<div style="position:absolute;left:168.00px;top:257.00px;width:492.00px;height:18.00px;background:linear-gradient(#fafafa 0%,#e8e9ea 50%,#cfd1d3 100%);border-bottom:1px solid #55585c;"></div>
<div class="t" style="left:182.00px;top:261.19px;font-size:11px;line-height:11px;color:#000;transform:scaleX(0.9903);transform-origin:0 0;">Parâmetros</div>
<div style="position:absolute;left:176px;top:284px;width:10px;height:10px;border:1px solid #8e8f8f;background:linear-gradient(135deg,#dcdcdc 0%,#f0f0f0 50%,#fbfbfb 100%);box-sizing:content-box;"></div>
<svg style="position:absolute;left:176px;top:284px" width="13" height="13"><path d="M2.8 6 L5.2 9 L9.5 2.8" stroke="#4a6a9c" stroke-width="1.9" fill="none"/></svg>
<div class="t" style="left:192.40px;top:284.69px;font-size:11px;line-height:11px;color:#000;transform:scaleX(1.0103);transform-origin:0 0;">Inclui Variação de Existências</div>
<div style="position:absolute;left:176px;top:309px;width:10px;height:10px;border:1px solid #8e8f8f;background:linear-gradient(135deg,#dcdcdc 0%,#f0f0f0 50%,#fbfbfb 100%);box-sizing:content-box;"></div><svg style="position:absolute;left:176px;top:309px" width="13" height="13"><path d="M2.8 6 L5.2 9 L9.5 2.8" stroke="#4a6a9c" stroke-width="1.9" fill="none"/></svg>
<div class="t" style="left:192.40px;top:309.69px;font-size:11px;line-height:11px;color:#000;transform:scaleX(1.0007);transform-origin:0 0;">Inclui Anexo SS</div>
<div style="position:absolute;left:188px;top:334px;width:10px;height:10px;border:1px solid #8e8f8f;background:linear-gradient(135deg,#dcdcdc 0%,#f0f0f0 50%,#fbfbfb 100%);box-sizing:content-box;"></div>
<div class="t" style="left:204.30px;top:334.69px;font-size:11px;line-height:11px;color:#000;transform:scaleX(1.0522);transform-origin:0 0;">Ignora acumulados negativos</div>
<div style="position:absolute;left:176px;top:364px;width:10px;height:10px;border:1px solid #8e8f8f;background:linear-gradient(135deg,#dcdcdc 0%,#f0f0f0 50%,#fbfbfb 100%);box-sizing:content-box;"></div>
<div class="t" style="left:192.40px;top:358.49px;font-size:11px;line-height:11px;color:#000;transform:scaleX(1.0500);transform-origin:0 0;">A totalidade dos rendimentos auferidos resulta de serviços prestados a uma</div>
<div class="t" style="left:192.40px;top:371.19px;font-size:11px;line-height:11px;color:#000;transform:scaleX(1.0369);transform-origin:0 0;">entidade?</div>
<div style="position:absolute;left:188px;top:395px;width:10px;height:10px;border:1px solid #c8c8c8;background:linear-gradient(135deg,#f4f4f4,#fafafa);box-sizing:content-box;"></div>
<div class="t" style="left:204.30px;top:395.69px;font-size:11px;line-height:11px;color:#9a9a9a;transform:scaleX(1.0430);transform-origin:0 0;">Opta pela tributação segundo as regras estabelecidas para a categoria A</div>
<div style="position:absolute;left:167.00px;top:497.00px;width:88.00px;height:25.00px;box-sizing:border-box;border:1px solid #8a8a8a;border-radius:3px;background:linear-gradient(#fbfbfb 0%,#f1f1f1 45%,#dcdee2 55%,#e8eaec 100%);"></div><div class="t" style="left:186px;top:504.19px;font-size:11px;line-height:11px;color:#000;transform:scaleX(1.0194);transform-origin:0 0">Ver <u>A</u>ntes</div>
<div style="position:absolute;left:261.00px;top:497.00px;width:89.00px;height:25.00px;box-sizing:border-box;border:1px solid #8a8a8a;border-radius:3px;background:linear-gradient(#fbfbfb 0%,#f1f1f1 45%,#dcdee2 55%,#e8eaec 100%);"></div><div class="t" style="left:283px;top:504.19px;font-size:11px;line-height:11px;color:#000;transform:scaleX(1.0344);transform-origin:0 0">Exportar</div>
<div style="position:absolute;left:356.00px;top:497.00px;width:90.00px;height:25.00px;box-sizing:border-box;border:1px solid #8a8a8a;border-radius:3px;background:linear-gradient(#fbfbfb 0%,#f1f1f1 45%,#dcdee2 55%,#e8eaec 100%);"></div><div class="t" style="left:379px;top:504.19px;font-size:11px;line-height:11px;color:#000;transform:scaleX(1.0576);transform-origin:0 0"><u>I</u>mprimir</div>
<svg width="0" height="0" style="position:absolute"><defs><linearGradient id="gp" x1="0" y1="0" x2="0" y2="1"><stop offset="0" stop-color="#b8dcb0"/><stop offset="1" stop-color="#4a8a4a"/></linearGradient><linearGradient id="gp2" x1="0" y1="0" x2="0" y2="1"><stop offset="0" stop-color="#e8f0e8"/><stop offset="1" stop-color="#98a898"/></linearGradient><radialGradient id="nb" cx="0.4" cy="0.35" r="0.7"><stop offset="0" stop-color="#5ab0f0"/><stop offset="1" stop-color="#1060b8"/></radialGradient></defs></svg>
<div style="position:absolute;left:565.00px;top:230.00px;width:823.00px;height:537.00px;background:#2e2f31;"></div>
<div style="position:absolute;left:565.00px;top:230.00px;width:823.00px;height:28.00px;background:linear-gradient(#46474a 0%,#3a3b3d 35%,#2c2c2e 60%,#38393b 100%);"></div>
<svg style="position:absolute;left:570px;top:235.5px" width="13.3" height="16.1" viewBox="0 0 14 17"><defs><radialGradient id="aig" cx="0.5" cy="0.5" r="0.55"><stop offset="0" stop-color="#d8400c"/><stop offset="0.6" stop-color="#ec6a14"/><stop offset="0.85" stop-color="#f7a62a"/><stop offset="1" stop-color="#f8c050" stop-opacity="0.6"/></radialGradient></defs><ellipse cx="7" cy="8.5" rx="6.3" ry="7.8" fill="url(#aig)"/><path d="M10.5 5 L10.8 12.5 M4.2 9 L10.8 12.5" stroke="#200800" stroke-width="1.5" stroke-linecap="round" opacity="0.9"/></svg>
<div class="t" style="left:590.00px;top:238.34px;font-size:12px;line-height:12px;color:#f2f2f2;transform:scaleX(0.9537);transform-origin:0 0;">Visualizar Impressão</div>
<div style="position:absolute;left:1344.00px;top:241.00px;width:10.00px;height:7.00px;box-sizing:border-box;border:1.5px solid #c8c8c8;border-top-width:3px;"></div>
<svg style="position:absolute;left:1368px;top:239px" width="11" height="10"><path d="M1.5 1 L9.5 9 M9.5 1 L1.5 9" stroke="#c8c8c8" stroke-width="2.3"/></svg>
<div style="position:absolute;left:567.00px;top:258.00px;width:818.00px;height:506.00px;background:#dfe9f6;"></div>
<div style="position:absolute;left:567.00px;top:258.00px;width:818.00px;height:28.00px;background:linear-gradient(#f0f6fe 0%,#dceafc 40%,#c4daf6 70%,#90b4e8 100%);border-bottom:1px solid #5a80c0;box-sizing:border-box;"></div>
<div style="position:absolute;left:572.00px;top:264.00px;width:2.00px;height:2.00px;background:#1a3a7a;"></div>
<div style="position:absolute;left:572.00px;top:268.00px;width:2.00px;height:2.00px;background:#1a3a7a;"></div>
<div style="position:absolute;left:572.00px;top:272.00px;width:2.00px;height:2.00px;background:#1a3a7a;"></div>
<div style="position:absolute;left:572.00px;top:276.00px;width:2.00px;height:2.00px;background:#1a3a7a;"></div>
<svg style="position:absolute;left:578px;top:264px" width="17" height="15" viewBox="0 0 17 15">
<path d="M4 1.5h8l1.5 4h-11z" fill="#fff" stroke="#888" stroke-width=".8"/>
<rect x="0.5" y="5.5" width="16" height="6.5" rx="1.5" fill="#e4e8ec" stroke="#606870"/>
<rect x="2.5" y="11" width="12" height="3.5" fill="#fff" stroke="#707880" stroke-width=".8"/>
<rect x="12" y="9" width="3" height="2" fill="#2aa02a"/></svg>
<div class="t" style="left:604.00px;top:266.64px;font-size:12px;line-height:12px;color:#111;transform:scaleX(1.0072);transform-origin:0 0;">Miniaturas</div>
<svg style="position:absolute;left:699px;top:264px" width="17" height="15" viewBox="0 0 17 15">
<rect x="1" y="6" width="6" height="8" rx="1.5" fill="#5a7ac0" stroke="#1a2a6a" stroke-width=".8"/>
<rect x="10" y="6" width="6" height="8" rx="1.5" fill="#5a7ac0" stroke="#1a2a6a" stroke-width=".8"/>
<rect x="2.5" y="1" width="4" height="6" fill="#8aa4d8" stroke="#1a2a6a" stroke-width=".8"/>
<rect x="10.5" y="1" width="4" height="6" fill="#8aa4d8" stroke="#1a2a6a" stroke-width=".8"/>
<rect x="6.5" y="5" width="4" height="4" fill="#1a2a6a"/>
<rect x="2" y="10" width="3" height="3" fill="#fff"/><rect x="11" y="10" width="3" height="3" fill="#fff"/></svg>
<svg style="position:absolute;left:755px;top:264px" width="16" height="16"><rect x="0.5" y="0.5" width="15" height="14" rx="1.5" fill="url(#gp)" stroke="#4a7a4a"/><rect x="5" y="2.5" width="6.5" height="10.5" fill="#fff" stroke="#4a4a52" stroke-width=".8"/><path d="M6 5.5h4.5M6 7.5h4.5M6 9.5h4.5M6 11.5h4.5" stroke="#4a4a52" stroke-width="1"/></svg>
<div style="position:absolute;left:775.00px;top:261.00px;width:23.00px;height:22.00px;box-sizing:border-box;border:1.5px solid #16246a;background:linear-gradient(#fccb98,#f7a560);"></div>
<svg style="position:absolute;left:779px;top:264px" width="16" height="16"><rect x="3.5" y="2.5" width="9" height="10.5" fill="#fff" stroke="#4a4a52" stroke-width=".8"/><path d="M5 5.5h6M5 7.5h6M5 9.5h6M5 11.5h6" stroke="#4a4a52" stroke-width="1"/><path d="M0.5 7.5l3-2.5v5zM15.5 7.5l-3-2.5v5z" fill="#3a5a9a"/></svg>
<svg style="position:absolute;left:801px;top:264px" width="16" height="16"><rect x="0.5" y="0.5" width="15" height="14" rx="1.5" fill="url(#gp)" stroke="#4a7a4a"/><rect x="6" y="5" width="9.5" height="9.5" fill="#fff" stroke="#4a4a52" stroke-width=".8"/><path d="M7.5 8.5h6.5M7.5 11.5h6.5" stroke="#4a4a52" stroke-width="1"/></svg>
<div style="position:absolute;left:822.00px;top:262.00px;width:35.00px;height:21.00px;background:#fff;"></div>
<div class="t" style="left:825.00px;top:266.84px;font-size:12px;line-height:12px;color:#000;transform:scaleX(0.8744);transform-origin:0 0;">78%</div>
<svg style="position:absolute;left:892.5px;top:264px" width="16" height="16"><circle cx="8" cy="8" r="7.5" fill="#c4c8cc" stroke="#b0b4b8" stroke-width=".8"/><path d="M5 4v8" stroke="#e4e6e8" stroke-width="1.6"/><path d="M12 4L6.5 8L12 12Z" fill="#e4e6e8"/></svg>
<svg style="position:absolute;left:915.5px;top:264px" width="16" height="16"><circle cx="8" cy="8" r="7.5" fill="#c4c8cc" stroke="#b0b4b8" stroke-width=".8"/><path d="M10.5 4L5 8L10.5 12Z" fill="#e4e6e8"/></svg>
<div style="position:absolute;left:937.00px;top:261.50px;width:35.00px;height:21.50px;background:#fff;"></div>
<div class="t" style="left:941.00px;top:266.84px;font-size:12px;line-height:12px;color:#000;">1</div>
<svg style="position:absolute;left:976px;top:264px" width="16" height="16"><circle cx="8" cy="8" r="7.5" fill="url(#nb)" stroke="#1a4a8a" stroke-width=".8"/><path d="M6 4L11.5 8L6 12Z" fill="#fff"/></svg>
<svg style="position:absolute;left:998.5px;top:264px" width="16" height="16"><circle cx="8" cy="8" r="7.5" fill="url(#nb)" stroke="#1a4a8a" stroke-width=".8"/><path d="M4.5 4L10 8L4.5 12Z" fill="#fff"/><path d="M11.2 4v8" stroke="#fff" stroke-width="1.8"/></svg>
<svg style="position:absolute;left:1054px;top:264px" width="16" height="16"><rect x="0.5" y="0.5" width="15" height="14" rx="1.5" fill="url(#gp)" stroke="#4a7a4a"/><rect x="5" y="1.5" width="6.5" height="12" fill="#fff" stroke="#4a4a52" stroke-width=".8"/><path d="M6 4.5h4.5M6 6.5h4.5M6 8.5h4.5M6 10.5h4.5" stroke="#4a4a52" stroke-width="1"/></svg>
<div style="position:absolute;left:1074.00px;top:261.00px;width:23.00px;height:22.00px;box-sizing:border-box;border:1.5px solid #16246a;background:linear-gradient(#fccb98,#f7a560);"></div>
<svg style="position:absolute;left:1077.5px;top:264px" width="16" height="16"><rect x="0.5" y="0.5" width="15" height="14" rx="1.5" fill="url(#gp)" stroke="#4a7a4a"/><rect x="5" y="1.5" width="6.5" height="12" fill="#fff" stroke="#4a4a52" stroke-width=".8"/><path d="M6 4.5h4.5M6 6.5h4.5M6 8.5h4.5M6 10.5h4.5" stroke="#4a4a52" stroke-width="1"/></svg>
<svg style="position:absolute;left:1100px;top:264px" width="16" height="16"><rect x="0.5" y="0.5" width="15" height="14" rx="1.5" fill="url(#gp)" stroke="#4a7a4a"/><rect x="2.5" y="1.5" width="5" height="12" fill="#fff" stroke="#4a4a52" stroke-width=".8"/><rect x="8.5" y="1.5" width="5" height="12" fill="#fff" stroke="#4a4a52" stroke-width=".8"/><path d="M3.5 4.5h3M3.5 7.5h3M3.5 10.5h3M9.5 4.5h3M9.5 7.5h3M9.5 10.5h3" stroke="#4a4a52" stroke-width="1"/></svg>
<svg style="position:absolute;left:1123px;top:264px" width="16" height="16"><rect x="0.5" y="0.5" width="15" height="15" rx="1.5" fill="url(#gp2)" stroke="#6a7a6a"/><rect x="2.5" y="1.5" width="4.5" height="5.5" fill="#fff" stroke="#4a4a52" stroke-width=".8"/><rect x="9" y="1.5" width="4.5" height="5.5" fill="#fff" stroke="#4a4a52" stroke-width=".8"/><rect x="2.5" y="8.5" width="4.5" height="6" fill="#fff" stroke="#4a4a52" stroke-width=".8"/><rect x="9" y="8.5" width="4.5" height="6" fill="#fff" stroke="#4a4a52" stroke-width=".8"/><path d="M3.5 4.5h2.5M10 4.5h2.5M3.5 11.5h2.5M10 11.5h2.5" stroke="#4a4a52" stroke-width="1"/></svg>
<div class="t" style="left:1180.00px;top:266.54px;font-size:12px;line-height:12px;color:#111;transform:scaleX(0.9372);transform-origin:0 0;">Fechar</div>
<div style="position:absolute;left:570.00px;top:289.00px;width:121.00px;height:450.00px;background:#a2a2a4;"></div>
<div style="position:absolute;left:691.00px;top:286.00px;width:7.00px;height:454.00px;background:#e4ecf8;"></div>
<div style="position:absolute;left:698.00px;top:288.00px;width:668.00px;height:452.00px;background:#a4a2a4;"></div>
<div style="position:absolute;left:1366.00px;top:288.00px;width:19.00px;height:452.00px;background:#efefef;"></div>
<div style="position:absolute;left:1367.00px;top:305.00px;width:16.00px;height:72.00px;background:#cdcdcd;"></div>
<svg style="position:absolute;left:1369px;top:292px" width="11" height="8"><path d="M1 6.5 L5.5 2 L10 6.5" stroke="#505050" stroke-width="1.8" fill="none"/></svg>
<svg style="position:absolute;left:1369px;top:727px" width="11" height="8"><path d="M1 1.5 L5.5 6 L10 1.5" stroke="#505050" stroke-width="1.8" fill="none"/></svg>
<div style="position:absolute;left:567.00px;top:740.00px;width:818.00px;height:24.00px;background:linear-gradient(#f2f6fe 0%,#dae8fc 40%,#c2d8f6 70%,#9ab8e8 100%);"></div>
<div class="t" style="left:568.30px;top:747.34px;font-size:12px;line-height:12px;color:#000;transform:scaleX(0.8777);transform-origin:0 0;">Página 1 de 3</div>
<div style="position:absolute;left:838.00px;top:746.00px;width:1.00px;height:13.00px;background:#6080a0;"></div>
<div style="position:absolute;left:1382.00px;top:751.00px;width:2.00px;height:2.00px;background:#1a2a5a;"></div>
<div style="position:absolute;left:1378.00px;top:755.00px;width:2.00px;height:2.00px;background:#1a2a5a;"></div>
<div style="position:absolute;left:1382.00px;top:755.00px;width:2.00px;height:2.00px;background:#1a2a5a;"></div>
<div style="position:absolute;left:1374.00px;top:759.00px;width:2.00px;height:2.00px;background:#1a2a5a;"></div>
<div style="position:absolute;left:1378.00px;top:759.00px;width:2.00px;height:2.00px;background:#1a2a5a;"></div>
<div style="position:absolute;left:1382.00px;top:759.00px;width:2.00px;height:2.00px;background:#1a2a5a;"></div>
<div style="position:absolute;left:601px;top:319.6px;width:60px;height:84px;overflow:hidden;background:#fff"><div style="position:absolute;left:0;top:0;width:1440px;height:1300px;transform-origin:0 0;transform:scale(0.09693) translate(-723px,-311px);"><div style="position:absolute;left:723.00px;top:311.00px;width:619.00px;height:889.00px;background:#fff;"></div>
<div style="position:absolute;left:751.40px;top:333.60px;width:14.00px;height:197.40px;box-sizing:border-box;border:1px solid #555;border-radius:2px;"></div>
<div class="t" style="left:758.5px;top:522px;font-size:8px;line-height:8px;font-weight:bold;color:#222;transform-origin:0 0;transform:rotate(-90deg) scaleX(0.8922) translateY(-4px);">MODELO EM VIGOR A PARTIR DE JANEIRO DE 2021</div>
<div style="position:absolute;left:769.00px;top:334.00px;width:546.50px;height:816.00px;box-sizing:border-box;border:1.3px solid #555;"></div>
<div style="position:absolute;left:771.70px;top:336.80px;width:145.00px;height:83.70px;box-sizing:border-box;border:1px solid #505050;background:transparent;"></div>
<div class="t" style="left:827.00px;top:347.27px;font-size:5px;line-height:5px;color:#666;">R.</div>
<div class="t" style="left:855.00px;top:347.27px;font-size:5px;line-height:5px;color:#666;">P.</div>
<svg style="position:absolute;left:837px;top:341px" width="14" height="17" viewBox="0 0 14 17"><ellipse cx="7" cy="8" rx="5.5" ry="6.5" fill="#e8e8e8" stroke="#777" stroke-width="1"/><ellipse cx="7" cy="8" rx="3" ry="3.6" fill="none" stroke="#888" stroke-width=".8"/><path d="M3 14 Q7 17 11 14" stroke="#888" fill="none"/></svg>
<div class="t" style="left:794.00px;top:363.70px;font-size:6.5px;line-height:6.5px;font-weight:bold;color:#333;transform:scaleX(1.1257);transform-origin:0 0;">MINISTÉRIO DAS FINANÇAS</div>
<div class="t" style="left:782.00px;top:373.90px;font-size:6.5px;line-height:6.5px;font-weight:bold;color:#333;transform:scaleX(0.9451);transform-origin:0 0;">AUTORIDADE TRIBUTÁRIA E ADUANEIRA</div>
<div class="t" style="left:786.50px;top:384.10px;font-size:6.5px;line-height:6.5px;color:#555;transform:scaleX(0.9454);transform-origin:0 0;">DECLARAÇÃO DE RENDIMENTOS - IRS</div>
<svg style="position:absolute;left:802px;top:398px" width="28" height="17" viewBox="0 0 28 17"><path d="M3 2h8l-4 14h-6z" fill="#111"/><path d="M10 2h9l-1 4h-3l-3 10h-4l3-10h-2z" fill="#111"/><circle cx="23.5" cy="4.5" r="2.8" fill="#111"/></svg>
<div class="t" style="left:841.00px;top:398.70px;font-size:6.5px;line-height:6.5px;color:#555;transform:scaleX(1.1159);transform-origin:0 0;white-space:pre;">MODELO  3</div>
<div class="t" style="left:841.00px;top:407.32px;font-size:8.6px;line-height:8.6px;font-weight:bold;color:#222;transform:scaleX(1.1181);transform-origin:0 0;">Anexo B</div>
<div style="position:absolute;left:920.10px;top:336.60px;width:243.70px;height:83.80px;box-sizing:border-box;border:1px solid #505050;background:transparent;"></div>
<div style="position:absolute;left:934.30px;top:337.60px;width:228.50px;height:18.90px;background:#c9c9cb;"></div>
<div style="position:absolute;left:920.10px;top:356.00px;width:243.70px;height:1.00px;background:#505050;"></div>
<div style="position:absolute;left:920.10px;top:336.60px;width:14.20px;height:20.40px;box-sizing:border-box;border:1px solid #505050;background:transparent;"></div>
<div class="t" style="left:925.50px;top:344.00px;font-size:6.5px;line-height:6.5px;font-weight:bold;color:#222;">1</div>
<div class="t" style="left:990.00px;top:338.97px;font-size:7px;line-height:7px;font-weight:bold;color:#333;transform:scaleX(1.0216);transform-origin:0 0;white-space:pre;">RENDIMENTOS DA CATEGORIA  B</div>
<div class="t" style="left:981.40px;top:347.37px;font-size:7px;line-height:7px;font-weight:bold;color:#333;transform:scaleX(1.0228);transform-origin:0 0;">REGIME SIMPLIFICADO / ATO ISOLADO</div>
<div class="t" style="left:963.90px;top:364.20px;font-size:6.5px;line-height:6.5px;color:#555;transform:scaleX(1.0211);transform-origin:0 0;">Regime simplificado de tributação</div>
<div style="position:absolute;left:1091.20px;top:362.40px;width:20.70px;height:10.20px;box-sizing:border-box;border:1px solid #6a6a6a;background:#fff;"></div><div style="position:absolute;left:1091.20px;top:362.40px;width:10.50px;height:10.20px;box-sizing:border-box;border:1px solid #6a6a6a;background:#c9c9cb;"></div><div class="t" style="left:1092.80px;top:364.70px;font-size:6.5px;line-height:6.5px;font-weight:bold;color:#333;">01</div>
<div class="t" style="left:963.90px;top:378.20px;font-size:6.5px;line-height:6.5px;color:#555;">Ato isolado</div>
<div style="position:absolute;left:1091.20px;top:376.47px;width:20.70px;height:10.20px;box-sizing:border-box;border:1px solid #6a6a6a;background:#fff;"></div><div style="position:absolute;left:1091.20px;top:376.47px;width:10.50px;height:10.20px;box-sizing:border-box;border:1px solid #6a6a6a;background:#c9c9cb;"></div><div class="t" style="left:1092.80px;top:378.77px;font-size:6.5px;line-height:6.5px;font-weight:bold;color:#333;">02</div>
<div class="t" style="left:963.90px;top:392.30px;font-size:6.5px;line-height:6.5px;color:#555;transform:scaleX(1.0175);transform-origin:0 0;">Profissionais, comerciais e industriais</div>
<div style="position:absolute;left:1091.20px;top:390.54px;width:20.70px;height:10.20px;box-sizing:border-box;border:1px solid #6a6a6a;background:#fff;"></div><div style="position:absolute;left:1091.20px;top:390.54px;width:10.50px;height:10.20px;box-sizing:border-box;border:1px solid #6a6a6a;background:#c9c9cb;"></div><div class="t" style="left:1092.80px;top:392.84px;font-size:6.5px;line-height:6.5px;font-weight:bold;color:#333;">03</div>
<div class="t" style="left:1103.00px;top:393.07px;font-size:10px;line-height:10px;font-weight:bold;color:#000;">X</div>
<div class="t" style="left:963.90px;top:406.50px;font-size:6.5px;line-height:6.5px;color:#555;transform:scaleX(1.0175);transform-origin:0 0;">Agrícolas, silvícolas e pecuários</div>
<div style="position:absolute;left:1091.20px;top:404.61px;width:20.70px;height:10.20px;box-sizing:border-box;border:1px solid #6a6a6a;background:#fff;"></div><div style="position:absolute;left:1091.20px;top:404.61px;width:10.50px;height:10.20px;box-sizing:border-box;border:1px solid #6a6a6a;background:#c9c9cb;"></div><div class="t" style="left:1092.80px;top:406.91px;font-size:6.5px;line-height:6.5px;font-weight:bold;color:#333;">04</div>
<div class="t" style="left:1103.00px;top:407.14px;font-size:10px;line-height:10px;font-weight:bold;color:#000;">X</div>
<div style="position:absolute;left:1167.40px;top:336.70px;width:145.10px;height:83.80px;box-sizing:border-box;border:1px solid #505050;background:transparent;"></div>
<div style="position:absolute;left:1182.40px;top:337.70px;width:129.10px;height:18.70px;background:#c9c9cb;"></div>
<div style="position:absolute;left:1167.40px;top:355.90px;width:145.10px;height:1.00px;background:#505050;"></div>
<div style="position:absolute;left:1167.40px;top:336.70px;width:15.00px;height:20.30px;box-sizing:border-box;border:1px solid #505050;background:transparent;"></div>
<div class="t" style="left:1172.50px;top:344.00px;font-size:6.5px;line-height:6.5px;font-weight:bold;color:#222;">2</div>
<div class="t" style="left:1203.00px;top:343.07px;font-size:7px;line-height:7px;font-weight:bold;color:#333;transform:scaleX(1.0207);transform-origin:0 0;">ANO DOS RENDIMENTOS</div>
<div style="position:absolute;left:1204.30px;top:383.00px;width:71.45px;height:13.50px;box-sizing:border-box;border:1px solid #6a6a6a;background:#fff;"></div><div style="position:absolute;left:1204.30px;top:383.00px;width:12.70px;height:13.50px;box-sizing:border-box;border:1px solid #6a6a6a;background:#c9c9cb;"></div><div class="t" style="left:1205.90px;top:388.60px;font-size:6.5px;line-height:6.5px;font-weight:bold;color:#333;">01</div><div class="t" style="left:1233.00px;top:385.46px;font-size:9.5px;line-height:9.5px;color:#111;transform:scaleX(1.1073);transform-origin:0 0;">2021</div>
<div style="position:absolute;left:772.00px;top:423.90px;width:540.50px;height:13.10px;box-sizing:border-box;border:1px solid #505050;background:transparent;"></div>
<div style="position:absolute;left:785.80px;top:424.90px;width:525.70px;height:11.70px;background:#c9c9cb;"></div>
<div style="position:absolute;left:772.00px;top:423.90px;width:13.80px;height:13.10px;box-sizing:border-box;border:1px solid #505050;background:transparent;"></div>
<div class="t" style="left:776.50px;top:428.00px;font-size:6.5px;line-height:6.5px;font-weight:bold;color:#222;">3</div>
<div class="t" style="left:967.50px;top:426.87px;font-size:7px;line-height:7px;font-weight:bold;color:#333;transform:scaleX(1.0214);transform-origin:0 0;">IDENTIFICAÇÃO DO(S) SUJEITO(S) PASSIVO(S)</div>
<div style="position:absolute;left:772.00px;top:437.00px;width:1.00px;height:104.00px;background:#505050;"></div>
<div style="position:absolute;left:1311.50px;top:437.00px;width:1.00px;height:104.00px;background:#505050;"></div>
<div class="t" style="left:777.50px;top:444.50px;font-size:6.5px;line-height:6.5px;color:#555;">Sujeito passivo </div>
<div class="t" style="left:823.02px;top:444.50px;font-size:6.5px;line-height:6.5px;font-weight:bold;color:#333;">A</div>
<div class="t" style="left:829.00px;top:444.50px;font-size:6.5px;line-height:6.5px;color:#555;white-space:pre;"> -  NIF</div>
<div style="position:absolute;left:855.30px;top:440.80px;width:13.90px;height:11.80px;box-sizing:border-box;border:1px solid #6a6a6a;background:#fff;"></div><div style="position:absolute;left:855.30px;top:440.80px;width:13.90px;height:11.80px;box-sizing:border-box;border:1px solid #6a6a6a;background:#c9c9cb;"></div><div class="t" style="left:856.90px;top:444.70px;font-size:6.5px;line-height:6.5px;font-weight:bold;color:#333;">01</div>
<div style="position:absolute;left:869.20px;top:452.00px;width:130.80px;height:0.80px;background:#666;"></div>
<div style="position:absolute;left:880.00px;top:450.50px;width:1.00px;height:2.30px;background:#666;"></div>
<div style="position:absolute;left:890.80px;top:450.50px;width:1.00px;height:2.30px;background:#666;"></div>
<div style="position:absolute;left:901.60px;top:450.50px;width:1.00px;height:2.30px;background:#666;"></div>
<div style="position:absolute;left:912.40px;top:450.50px;width:1.00px;height:2.30px;background:#666;"></div>
<div style="position:absolute;left:923.20px;top:450.50px;width:1.00px;height:2.30px;background:#666;"></div>
<div style="position:absolute;left:934.00px;top:450.50px;width:1.00px;height:2.30px;background:#666;"></div>
<div style="position:absolute;left:944.80px;top:450.50px;width:1.00px;height:2.30px;background:#666;"></div>
<div style="position:absolute;left:955.60px;top:450.50px;width:1.00px;height:2.30px;background:#666;"></div>
<div style="position:absolute;left:966.40px;top:450.50px;width:1.00px;height:2.30px;background:#666;"></div>
<div style="position:absolute;left:977.20px;top:450.50px;width:1.00px;height:2.30px;background:#666;"></div>
<div style="position:absolute;left:988.00px;top:450.50px;width:1.00px;height:2.30px;background:#666;"></div>
<div style="position:absolute;left:998.80px;top:450.50px;width:1.00px;height:2.30px;background:#666;"></div>
<div class="t" style="left:1077.00px;top:444.50px;font-size:6.5px;line-height:6.5px;color:#555;">Sujeito passivo </div>
<div class="t" style="left:1122.52px;top:444.50px;font-size:6.5px;line-height:6.5px;font-weight:bold;color:#333;">B</div>
<div class="t" style="left:1128.86px;top:444.50px;font-size:6.5px;line-height:6.5px;color:#555;white-space:pre;"> -  NIF</div>
<div style="position:absolute;left:1155.30px;top:441.00px;width:13.30px;height:11.60px;box-sizing:border-box;border:1px solid #6a6a6a;background:#fff;"></div><div style="position:absolute;left:1155.30px;top:441.00px;width:13.30px;height:11.60px;box-sizing:border-box;border:1px solid #6a6a6a;background:#c9c9cb;"></div><div class="t" style="left:1156.90px;top:444.70px;font-size:6.5px;line-height:6.5px;font-weight:bold;color:#333;">02</div>
<div style="position:absolute;left:1168.60px;top:452.00px;width:131.40px;height:0.80px;background:#666;"></div>
<div style="position:absolute;left:1180.00px;top:450.50px;width:1.00px;height:2.30px;background:#666;"></div>
<div style="position:absolute;left:1190.80px;top:450.50px;width:1.00px;height:2.30px;background:#666;"></div>
<div style="position:absolute;left:1201.60px;top:450.50px;width:1.00px;height:2.30px;background:#666;"></div>
<div style="position:absolute;left:1212.40px;top:450.50px;width:1.00px;height:2.30px;background:#666;"></div>
<div style="position:absolute;left:1223.20px;top:450.50px;width:1.00px;height:2.30px;background:#666;"></div>
<div style="position:absolute;left:1234.00px;top:450.50px;width:1.00px;height:2.30px;background:#666;"></div>
<div style="position:absolute;left:1244.80px;top:450.50px;width:1.00px;height:2.30px;background:#666;"></div>
<div style="position:absolute;left:1255.60px;top:450.50px;width:1.00px;height:2.30px;background:#666;"></div>
<div style="position:absolute;left:1266.40px;top:450.50px;width:1.00px;height:2.30px;background:#666;"></div>
<div style="position:absolute;left:1277.20px;top:450.50px;width:1.00px;height:2.30px;background:#666;"></div>
<div style="position:absolute;left:1288.00px;top:450.50px;width:1.00px;height:2.30px;background:#666;"></div>
<div style="position:absolute;left:1298.80px;top:450.50px;width:1.00px;height:2.30px;background:#666;"></div>
<div style="position:absolute;left:1306.50px;top:456.10px;width:5.50px;height:1.00px;background:#505050;"></div>
<div style="position:absolute;left:772.00px;top:456.00px;width:13.80px;height:14.00px;box-sizing:border-box;border:1px solid #505050;background:transparent;"></div>
<div style="position:absolute;left:785.80px;top:455.80px;width:7.80px;height:1.00px;background:#505050;"></div>
<div class="t" style="left:776.50px;top:461.00px;font-size:6.5px;line-height:6.5px;font-weight:bold;color:#222;">A</div>
<div class="t" style="left:996.40px;top:457.98px;font-size:9px;line-height:9px;font-weight:bold;color:#111;transform:scaleX(1.1572);transform-origin:0 0;">Empresa testes_ Elsa</div>
<div style="position:absolute;left:772.00px;top:469.10px;width:540.50px;height:1.00px;background:#505050;"></div>
<div class="t" style="left:777.50px;top:476.90px;font-size:6.5px;line-height:6.5px;color:#555;transform:scaleX(1.0288);transform-origin:0 0;">Este anexo respeita à atividade de herança indivisa?</div>
<div class="t" style="left:947.70px;top:476.90px;font-size:6.5px;line-height:6.5px;color:#555;">Sim</div>
<div style="position:absolute;left:963.30px;top:473.40px;width:26.40px;height:12.20px;box-sizing:border-box;border:1px solid #6a6a6a;background:#fff;"></div><div style="position:absolute;left:963.30px;top:473.40px;width:13.20px;height:12.20px;box-sizing:border-box;border:1px solid #6a6a6a;background:#c9c9cb;"></div><div class="t" style="left:964.90px;top:477.70px;font-size:6.5px;line-height:6.5px;font-weight:bold;color:#333;">03</div>
<div class="t" style="left:1005.60px;top:476.90px;font-size:6.5px;line-height:6.5px;color:#555;">Não</div>
<div style="position:absolute;left:1023.30px;top:473.40px;width:26.10px;height:12.20px;box-sizing:border-box;border:1px solid #6a6a6a;background:#fff;"></div><div style="position:absolute;left:1023.30px;top:473.40px;width:13.10px;height:12.20px;box-sizing:border-box;border:1px solid #6a6a6a;background:#c9c9cb;"></div><div class="t" style="left:1024.90px;top:477.70px;font-size:6.5px;line-height:6.5px;font-weight:bold;color:#333;">04</div>
<div class="t" style="left:1065.30px;top:476.90px;font-size:6.5px;line-height:6.5px;color:#555;">Se assinalou </div>
<div class="t" style="left:1105.49px;top:476.90px;font-size:6.5px;line-height:6.5px;font-weight:bold;color:#333;">SIM</div>
<div class="t" style="left:1118.91px;top:476.90px;font-size:6.5px;line-height:6.5px;color:#555;white-space:pre;">,  indique o NIF da herança indivisa</div>
<div class="t" style="left:796.25px;top:493.90px;font-size:6.5px;line-height:6.5px;color:#555;transform:scaleX(1.0281);transform-origin:0 0;">NIF do titular</div>
<div style="position:absolute;left:846.60px;top:490.40px;width:144.10px;height:12.20px;box-sizing:border-box;border:1px solid #6a6a6a;background:#fff;border-top-color:transparent;"></div><div style="position:absolute;left:846.60px;top:490.40px;width:12.15px;height:12.20px;box-sizing:border-box;border:1px solid #6a6a6a;background:#c9c9cb;"></div><div class="t" style="left:848.20px;top:494.70px;font-size:6.5px;line-height:6.5px;font-weight:bold;color:#333;">05</div><div class="t" style="left:897.30px;top:491.36px;font-size:9.5px;line-height:9.5px;color:#111;transform:scaleX(1.1168);transform-origin:0 0;">505868580</div>
<div class="t" style="left:1046.80px;top:493.90px;font-size:6.5px;line-height:6.5px;color:#555;transform:scaleX(1.0281);transform-origin:0 0;">NIF da herança indivisa</div>
<div style="position:absolute;left:1129.20px;top:491.00px;width:143.60px;height:11.60px;box-sizing:border-box;border:1px solid #6a6a6a;background:#fff;"></div><div style="position:absolute;left:1129.20px;top:491.00px;width:13.10px;height:11.60px;box-sizing:border-box;border:1px solid #6a6a6a;background:#c9c9cb;"></div><div class="t" style="left:1130.80px;top:494.70px;font-size:6.5px;line-height:6.5px;font-weight:bold;color:#333;">06</div><div style="position:absolute;left:1156.30px;top:497.60px;width:0.80px;height:5.00px;background:#555;"></div><div style="position:absolute;left:1170.90px;top:497.60px;width:0.80px;height:5.00px;background:#555;"></div><div style="position:absolute;left:1185.60px;top:497.60px;width:0.80px;height:5.00px;background:#555;"></div><div style="position:absolute;left:1200.20px;top:497.60px;width:0.80px;height:5.00px;background:#555;"></div><div style="position:absolute;left:1214.60px;top:497.60px;width:0.80px;height:5.00px;background:#555;"></div><div style="position:absolute;left:1229.20px;top:497.60px;width:0.80px;height:5.00px;background:#555;"></div><div style="position:absolute;left:1243.90px;top:497.60px;width:0.80px;height:5.00px;background:#555;"></div><div style="position:absolute;left:1258.10px;top:497.60px;width:0.80px;height:5.00px;background:#555;"></div>
<div class="t" style="left:783.20px;top:507.50px;font-size:6.5px;line-height:6.5px;color:#555;transform:scaleX(1.0252);transform-origin:0 0;">Código da tabela de atividades</div>
<div class="t" style="left:800.60px;top:515.60px;font-size:6.5px;line-height:6.5px;color:#555;transform:scaleX(1.0261);transform-origin:0 0;">art.º 151.º do CIRS</div>
<div style="position:absolute;left:791.90px;top:524.60px;width:71.70px;height:11.65px;box-sizing:border-box;border:1px solid #6a6a6a;background:#fff;border-top-color:transparent;"></div><div style="position:absolute;left:791.90px;top:524.60px;width:11.60px;height:11.65px;box-sizing:border-box;border:1px solid #6a6a6a;background:#c9c9cb;"></div><div class="t" style="left:793.50px;top:528.35px;font-size:6.5px;line-height:6.5px;font-weight:bold;color:#333;">07</div><div class="t" style="left:820.20px;top:526.16px;font-size:9.5px;line-height:9.5px;color:#111;transform:scaleX(1.1263);transform-origin:0 0;">4015</div>
<div class="t" style="left:1006.00px;top:507.50px;font-size:6.5px;line-height:6.5px;color:#555;transform:scaleX(1.0288);transform-origin:0 0;">Código CAE</div>
<div class="t" style="left:952.50px;top:515.50px;font-size:6.5px;line-height:6.5px;color:#555;transform:scaleX(0.9524);transform-origin:0 0;">(Rendimentos profissionais, comerciais e industriais)</div>
<div style="position:absolute;left:979.60px;top:524.60px;width:85.70px;height:11.65px;box-sizing:border-box;border:1px solid #6a6a6a;background:#fff;border-top-color:transparent;"></div><div style="position:absolute;left:979.60px;top:524.60px;width:12.10px;height:11.65px;box-sizing:border-box;border:1px solid #6a6a6a;background:#c9c9cb;"></div><div class="t" style="left:981.20px;top:528.35px;font-size:6.5px;line-height:6.5px;font-weight:bold;color:#333;">08</div><div class="t" style="left:1013.30px;top:525.96px;font-size:9.5px;line-height:9.5px;color:#111;transform:scaleX(1.1669);transform-origin:0 0;">35113</div>
<div class="t" style="left:1213.00px;top:508.10px;font-size:6.5px;line-height:6.5px;color:#555;transform:scaleX(1.0065);transform-origin:0 0;">Código CAE</div>
<div class="t" style="left:1166.60px;top:515.00px;font-size:6.5px;line-height:6.5px;color:#555;transform:scaleX(0.9487);transform-origin:0 0;">(Rendimentos agrícolas, silvícolas e pecuários)</div>
<div style="position:absolute;left:1186.20px;top:524.80px;width:85.60px;height:11.70px;box-sizing:border-box;border:1px solid #6a6a6a;background:#fff;border-top-color:transparent;"></div><div style="position:absolute;left:1186.20px;top:524.80px;width:12.40px;height:11.70px;box-sizing:border-box;border:1px solid #6a6a6a;background:#c9c9cb;"></div><div class="t" style="left:1187.80px;top:528.60px;font-size:6.5px;line-height:6.5px;font-weight:bold;color:#333;">09</div><div class="t" style="left:1220.30px;top:525.86px;font-size:9.5px;line-height:9.5px;color:#111;transform:scaleX(1.0941);transform-origin:0 0;">35210</div>
<div style="position:absolute;left:772.00px;top:540.20px;width:540.50px;height:1.60px;background:#505050;"></div>
<div style="position:absolute;left:772.00px;top:541.00px;width:13.40px;height:15.50px;box-sizing:border-box;border:1px solid #505050;background:transparent;"></div>
<div class="t" style="left:776.50px;top:546.50px;font-size:6.5px;line-height:6.5px;font-weight:bold;color:#222;">B</div>
<div class="t" style="left:937.00px;top:545.27px;font-size:7px;line-height:7px;color:#444;transform:scaleX(1.0145);transform-origin:0 0;">POSSUI ESTABELECIMENTO ESTÁVEL?</div>
<div class="t" style="left:1105.90px;top:546.00px;font-size:6.5px;line-height:6.5px;color:#555;">Sim</div>
<div style="position:absolute;left:1122.00px;top:542.40px;width:25.40px;height:12.10px;box-sizing:border-box;border:1px solid #6a6a6a;background:#fff;"></div><div style="position:absolute;left:1122.00px;top:542.40px;width:12.70px;height:12.10px;box-sizing:border-box;border:1px solid #6a6a6a;background:#c9c9cb;"></div><div class="t" style="left:1123.60px;top:546.60px;font-size:6.5px;line-height:6.5px;font-weight:bold;color:#333;">10</div>
<div class="t" style="left:1177.00px;top:546.00px;font-size:6.5px;line-height:6.5px;color:#555;">Não</div>
<div style="position:absolute;left:1192.50px;top:542.40px;width:25.70px;height:12.10px;box-sizing:border-box;border:1px solid #6a6a6a;background:#fff;"></div><div style="position:absolute;left:1192.50px;top:542.40px;width:13.30px;height:12.10px;box-sizing:border-box;border:1px solid #6a6a6a;background:#c9c9cb;"></div><div class="t" style="left:1194.10px;top:546.60px;font-size:6.5px;line-height:6.5px;font-weight:bold;color:#333;">11</div>
<div style="position:absolute;left:1311.50px;top:541.00px;width:1.00px;height:119.00px;background:#505050;"></div>
<div style="position:absolute;left:772.00px;top:555.70px;width:540.50px;height:1.60px;background:#505050;"></div>
<div style="position:absolute;left:772.00px;top:556.50px;width:13.40px;height:13.00px;box-sizing:border-box;border:1px solid #505050;background:transparent;"></div>
<div class="t" style="left:776.50px;top:561.00px;font-size:6.5px;line-height:6.5px;font-weight:bold;color:#222;">C</div>
<div class="t" style="left:924.80px;top:559.67px;font-size:7px;line-height:7px;color:#444;transform:scaleX(1.0227);transform-origin:0 0;">REGIME FISCAL APLICÁVEL A EX-RESIDENTES (ARTIGO 12.º-A DO CIRS)</div>
<div style="position:absolute;left:772.00px;top:569.00px;width:540.50px;height:1.00px;background:#505050;"></div>
<div class="t" style="left:777.60px;top:570.40px;font-size:6.5px;line-height:6.5px;color:#555;transform:scaleX(1.0156);transform-origin:0 0;">Se reúne os pressupostos e condições previstos nos n.ºs 1 e 2 do art.º 12.º-A do CIRS e pretende usufruir deste regime fiscal,</div>
<div class="t" style="left:777.60px;top:576.80px;font-size:6.5px;line-height:6.5px;color:#555;transform:scaleX(1.0232);transform-origin:0 0;">indique o ano em que se tornou residente em Portugal (2019 ou 2020)</div>
<div style="position:absolute;left:1192.50px;top:571.80px;width:71.00px;height:11.50px;box-sizing:border-box;border:1px solid #6a6a6a;background:#fff;"></div><div style="position:absolute;left:1192.50px;top:571.80px;width:13.30px;height:11.50px;box-sizing:border-box;border:1px solid #6a6a6a;background:#c9c9cb;"></div><div class="t" style="left:1194.10px;top:575.40px;font-size:6.5px;line-height:6.5px;font-weight:bold;color:#333;">12</div><div style="position:absolute;left:1219.90px;top:578.30px;width:0.80px;height:5.00px;background:#555;"></div><div style="position:absolute;left:1234.60px;top:578.30px;width:0.80px;height:5.00px;background:#555;"></div><div style="position:absolute;left:1249.10px;top:578.30px;width:0.80px;height:5.00px;background:#555;"></div>
<div style="position:absolute;left:772.00px;top:584.20px;width:540.50px;height:1.00px;background:#505050;"></div>
<div style="position:absolute;left:772.00px;top:584.70px;width:13.40px;height:12.60px;box-sizing:border-box;border:1px solid #505050;background:transparent;"></div>
<div class="t" style="left:776.50px;top:589.00px;font-size:6.5px;line-height:6.5px;font-weight:bold;color:#222;">D</div>
<div class="t" style="left:935.00px;top:587.47px;font-size:7px;line-height:7px;color:#444;transform:scaleX(1.0258);transform-origin:0 0;">REGIME FISCAL PREVISTO NOS N.ºs 9 E 10 DO ART.º 12.º DO CIRS</div>
<div style="position:absolute;left:772.00px;top:596.80px;width:540.50px;height:1.00px;background:#505050;"></div>
<div class="t" style="left:777.60px;top:604.50px;font-size:6.5px;line-height:6.5px;color:#555;transform:scaleX(1.0259);transform-origin:0 0;">Se reúne os pressupostos e condições previstas no n.º 9 do art.º 12.º do CIRS e pretende usufruir deste regime fiscal indique:</div>
<div class="t" style="left:786.80px;top:620.40px;font-size:6.5px;line-height:6.5px;color:#555;transform:scaleX(1.0232);transform-origin:0 0;">1 - Efetuou a comunicação prevista no n.º 10 do art.º 12.º do CIRS</div>
<div class="t" style="left:1012.30px;top:620.50px;font-size:6.5px;line-height:6.5px;color:#555;">Sim</div>
<div style="position:absolute;left:1028.50px;top:618.60px;width:25.50px;height:11.00px;box-sizing:border-box;border:1px solid #6a6a6a;background:#fff;"></div><div style="position:absolute;left:1028.50px;top:618.60px;width:12.50px;height:11.00px;box-sizing:border-box;border:1px solid #6a6a6a;background:#c9c9cb;"></div><div class="t" style="left:1030.10px;top:621.70px;font-size:6.5px;line-height:6.5px;font-weight:bold;color:#333;">13</div>
<div class="t" style="left:1070.80px;top:620.50px;font-size:6.5px;line-height:6.5px;color:#555;">Não</div>
<div style="position:absolute;left:1087.80px;top:618.50px;width:25.70px;height:11.10px;box-sizing:border-box;border:1px solid #6a6a6a;background:#fff;"></div><div style="position:absolute;left:1087.80px;top:618.50px;width:12.60px;height:11.10px;box-sizing:border-box;border:1px solid #6a6a6a;background:#c9c9cb;"></div><div class="t" style="left:1089.40px;top:621.70px;font-size:6.5px;line-height:6.5px;font-weight:bold;color:#333;">14</div>
<div class="t" style="left:1135.70px;top:629.50px;font-size:6.5px;line-height:6.5px;color:#555;transform:scaleX(1.0271);transform-origin:0 0;">NIF português</div>
<div class="t" style="left:1244.80px;top:629.50px;font-size:6.5px;line-height:6.5px;color:#555;transform:scaleX(1.0269);transform-origin:0 0;">Código do país</div>
<div class="t" style="left:795.70px;top:640.40px;font-size:6.5px;line-height:6.5px;color:#555;transform:scaleX(1.0215);transform-origin:0 0;">1.1 - Se assinalou "Não", identifique o estabelecimento de ensino que frequentou (ou o país)</div>
<div style="position:absolute;left:1085.70px;top:637.70px;width:130.90px;height:11.70px;box-sizing:border-box;border:1px solid #6a6a6a;background:#fff;"></div><div style="position:absolute;left:1085.70px;top:637.70px;width:13.30px;height:11.70px;box-sizing:border-box;border:1px solid #6a6a6a;background:#c9c9cb;"></div><div class="t" style="left:1087.30px;top:641.50px;font-size:6.5px;line-height:6.5px;font-weight:bold;color:#333;">15</div><div style="position:absolute;left:1111.70px;top:644.40px;width:0.80px;height:5.00px;background:#555;"></div><div style="position:absolute;left:1124.80px;top:644.40px;width:0.80px;height:5.00px;background:#555;"></div><div style="position:absolute;left:1137.90px;top:644.40px;width:0.80px;height:5.00px;background:#555;"></div><div style="position:absolute;left:1151.00px;top:644.40px;width:0.80px;height:5.00px;background:#555;"></div><div style="position:absolute;left:1164.10px;top:644.40px;width:0.80px;height:5.00px;background:#555;"></div><div style="position:absolute;left:1177.20px;top:644.40px;width:0.80px;height:5.00px;background:#555;"></div><div style="position:absolute;left:1190.30px;top:644.40px;width:0.80px;height:5.00px;background:#555;"></div><div style="position:absolute;left:1203.30px;top:644.40px;width:0.80px;height:5.00px;background:#555;"></div>
<div style="position:absolute;left:1231.30px;top:637.70px;width:65.50px;height:11.70px;box-sizing:border-box;border:1px solid #6a6a6a;background:#fff;"></div><div style="position:absolute;left:1231.30px;top:637.70px;width:13.10px;height:11.70px;box-sizing:border-box;border:1px solid #6a6a6a;background:#c9c9cb;"></div><div class="t" style="left:1232.90px;top:641.50px;font-size:6.5px;line-height:6.5px;font-weight:bold;color:#333;">16</div><div style="position:absolute;left:1257.10px;top:644.40px;width:0.80px;height:5.00px;background:#555;"></div><div style="position:absolute;left:1270.20px;top:644.40px;width:0.80px;height:5.00px;background:#555;"></div><div style="position:absolute;left:1283.30px;top:644.40px;width:0.80px;height:5.00px;background:#555;"></div>
<div style="position:absolute;left:772.00px;top:653.80px;width:540.50px;height:1.00px;background:#505050;"></div>
<div style="position:absolute;left:772.00px;top:657.40px;width:540.50px;height:482.60px;box-sizing:border-box;border:1px solid #505050;background:transparent;"></div>
<div style="position:absolute;left:785.40px;top:658.40px;width:526.10px;height:12.00px;background:#c9c9cb;"></div>
<div style="position:absolute;left:772.00px;top:657.40px;width:13.40px;height:13.50px;box-sizing:border-box;border:1px solid #505050;background:transparent;"></div>
<div class="t" style="left:776.50px;top:662.00px;font-size:6.5px;line-height:6.5px;font-weight:bold;color:#222;">4</div>
<div class="t" style="left:932.60px;top:660.57px;font-size:7px;line-height:7px;font-weight:bold;color:#333;transform:scaleX(1.0235);transform-origin:0 0;white-space:pre;">RENDIMENTOS BRUTOS  (OBTIDOS EM TERRITÓRIO PORTUGUÊS)</div>
<div style="position:absolute;left:772.00px;top:669.90px;width:540.50px;height:1.00px;background:#505050;"></div>
<div style="position:absolute;left:772.00px;top:670.40px;width:13.40px;height:12.60px;box-sizing:border-box;border:1px solid #505050;background:transparent;"></div>
<div class="t" style="left:776.50px;top:675.00px;font-size:6.5px;line-height:6.5px;font-weight:bold;color:#222;">A</div>
<div class="t" style="left:884.00px;top:672.87px;font-size:7px;line-height:7px;color:#444;transform:scaleX(1.0257);transform-origin:0 0;">RENDIMENTOS PROFISSIONAIS, COMERCIAIS E INDUSTRIAIS</div>
<div style="position:absolute;left:1195.80px;top:670.40px;width:1.00px;height:12.60px;background:#505050;"></div>
<div class="t" style="left:1243.00px;top:673.07px;font-size:7px;line-height:7px;color:#444;transform:scaleX(0.9909);transform-origin:0 0;">VALOR</div>
<div style="position:absolute;left:772.00px;top:682.20px;width:540.50px;height:1.00px;background:#505050;"></div>
<div class="t" style="left:777.60px;top:685.70px;font-size:6.5px;line-height:6.5px;color:#555;transform:scaleX(0.9662);transform-origin:0 0;">Vendas de mercadorias e produtos</div>
<div style="position:absolute;left:1178.50px;top:683.20px;width:17.10px;height:13.10px;background:#c9c9cb;border-left:1px solid #777;border-right:1px solid #777;box-sizing:border-box;"></div>
<div class="t" style="left:1182.00px;top:687.30px;font-size:6.5px;line-height:6.5px;font-weight:bold;color:#333;">401</div>
<div class="t" style="left:1293.00px;top:684.16px;font-size:9.5px;line-height:9.5px;color:#111;transform:scaleX(1.0007);transform-origin:0 0;">0,00</div>
<div style="position:absolute;left:772.00px;top:695.80px;width:540.50px;height:1.00px;background:#505050;"></div>
<div class="t" style="left:777.60px;top:699.50px;font-size:6.5px;line-height:6.5px;color:#555;transform:scaleX(1.0253);transform-origin:0 0;">Prestações de serviços de atividades hoteleiras e similares, restauração e bebidas - anos 2015 e 2016</div>
<div style="position:absolute;left:1178.50px;top:696.80px;width:17.10px;height:13.50px;background:#c9c9cb;border-left:1px solid #777;border-right:1px solid #777;box-sizing:border-box;"></div>
<div class="t" style="left:1182.00px;top:701.30px;font-size:6.5px;line-height:6.5px;font-weight:bold;color:#333;">402</div>
<div class="t" style="left:1293.00px;top:697.96px;font-size:9.5px;line-height:9.5px;color:#111;transform:scaleX(1.0007);transform-origin:0 0;">0,00</div>
<div style="position:absolute;left:772.00px;top:709.80px;width:540.50px;height:1.00px;background:#505050;"></div>
<div class="t" style="left:777.60px;top:713.10px;font-size:6.5px;line-height:6.5px;color:#555;transform:scaleX(1.0271);transform-origin:0 0;">Prestações de serviços de atividades de restauração e bebidas</div>
<div style="position:absolute;left:1178.50px;top:710.80px;width:17.10px;height:13.10px;background:#c9c9cb;border-left:1px solid #777;border-right:1px solid #777;box-sizing:border-box;"></div>
<div class="t" style="left:1182.00px;top:714.90px;font-size:6.5px;line-height:6.5px;font-weight:bold;color:#333;">415</div>
<div class="t" style="left:1293.00px;top:711.56px;font-size:9.5px;line-height:9.5px;color:#111;transform:scaleX(1.0007);transform-origin:0 0;">0,00</div>
<div style="position:absolute;left:772.00px;top:723.40px;width:540.50px;height:1.00px;background:#505050;"></div>
<div class="t" style="left:777.60px;top:726.70px;font-size:6.5px;line-height:6.5px;color:#555;transform:scaleX(1.0249);transform-origin:0 0;">Prestações de serviços de atividades hoteleiras e similares</div>
<div style="position:absolute;left:1178.50px;top:724.40px;width:17.10px;height:13.10px;background:#c9c9cb;border-left:1px solid #777;border-right:1px solid #777;box-sizing:border-box;"></div>
<div class="t" style="left:1182.00px;top:728.50px;font-size:6.5px;line-height:6.5px;font-weight:bold;color:#333;">416</div>
<div class="t" style="left:1293.00px;top:725.16px;font-size:9.5px;line-height:9.5px;color:#111;transform:scaleX(1.0007);transform-origin:0 0;">0,00</div>
<div style="position:absolute;left:772.00px;top:737.00px;width:540.50px;height:1.00px;background:#505050;"></div>
<div class="t" style="left:777.60px;top:740.30px;font-size:6.5px;line-height:6.5px;color:#555;transform:scaleX(1.0101);transform-origin:0 0;">Prestações de serviços de atividades hoteleiras e similares, restauração e bebidas - anos 2017 e seguintes</div>
<div style="position:absolute;left:1178.50px;top:738.00px;width:17.10px;height:13.10px;background:#c9c9cb;border-left:1px solid #777;border-right:1px solid #777;box-sizing:border-box;"></div>
<div class="t" style="left:1182.00px;top:742.10px;font-size:6.5px;line-height:6.5px;font-weight:bold;color:#333;">417</div>
<div class="t" style="left:1293.00px;top:738.76px;font-size:9.5px;line-height:9.5px;color:#111;transform:scaleX(1.0007);transform-origin:0 0;">0,00</div>
<div style="position:absolute;left:772.00px;top:750.60px;width:540.50px;height:1.00px;background:#505050;"></div>
<div class="t" style="left:777.60px;top:755.20px;font-size:6.5px;line-height:6.5px;color:#555;">Prestações de serviços de atividades xxxxxxxxxxxxxxxxxxxx</div>
<div style="position:absolute;left:1178.50px;top:751.60px;width:17.10px;height:13.10px;background:#c9c9cb;border-left:1px solid #777;border-right:1px solid #777;box-sizing:border-box;"></div>
<div class="t" style="left:1293.00px;top:753.66px;font-size:9.5px;line-height:9.5px;color:#111;transform:scaleX(1.0007);transform-origin:0 0;">0,00</div>
<div style="position:absolute;left:772.00px;top:764.20px;width:540.50px;height:1.00px;background:#505050;"></div>
<div class="t" style="left:777.60px;top:768.80px;font-size:6.5px;line-height:6.5px;color:#555;">Prestações de serviços de atividades xxxxxxxxxxxxxxxxxxxxxxxxxxxxxxxxxxxxxxxxxx</div>
<div style="position:absolute;left:1178.50px;top:765.20px;width:17.10px;height:13.10px;background:#c9c9cb;border-left:1px solid #777;border-right:1px solid #777;box-sizing:border-box;"></div>
<div class="t" style="left:1293.00px;top:767.26px;font-size:9.5px;line-height:9.5px;color:#111;transform:scaleX(1.0007);transform-origin:0 0;">0,00</div>
<div style="position:absolute;left:772.00px;top:777.80px;width:540.50px;height:1.00px;background:#505050;"></div>
<div class="t" style="left:777.60px;top:782.40px;font-size:6.5px;line-height:6.5px;color:#555;">Prestações de serviços de atividades xxxxxxxxxxxxxxxxxxxxxxxxxxxxxxxxxxxxxxx</div>
<div style="position:absolute;left:1178.50px;top:778.80px;width:17.10px;height:13.10px;background:#c9c9cb;border-left:1px solid #777;border-right:1px solid #777;box-sizing:border-box;"></div>
<div class="t" style="left:1293.00px;top:780.86px;font-size:9.5px;line-height:9.5px;color:#111;transform:scaleX(1.0007);transform-origin:0 0;">0,00</div>
<div style="position:absolute;left:772.00px;top:791.40px;width:540.50px;height:1.00px;background:#505050;"></div>
<div class="t" style="left:777.60px;top:796.00px;font-size:6.5px;line-height:6.5px;color:#555;">Prestações de serviços de atividades xxxxxxxxxxxxx</div>
<div style="position:absolute;left:1178.50px;top:792.40px;width:17.10px;height:13.10px;background:#c9c9cb;border-left:1px solid #777;border-right:1px solid #777;box-sizing:border-box;"></div>
<div class="t" style="left:1293.00px;top:794.46px;font-size:9.5px;line-height:9.5px;color:#111;transform:scaleX(1.0007);transform-origin:0 0;">0,00</div>
<div style="position:absolute;left:772.00px;top:805.00px;width:540.50px;height:1.00px;background:#505050;"></div>
<div class="t" style="left:777.60px;top:809.60px;font-size:6.5px;line-height:6.5px;color:#555;">Prestações de serviços de atividades xxxxxxxxxxxxxxxxxxxxxxxxxxxx</div>
<div style="position:absolute;left:1178.50px;top:806.00px;width:17.10px;height:13.10px;background:#c9c9cb;border-left:1px solid #777;border-right:1px solid #777;box-sizing:border-box;"></div>
<div class="t" style="left:1293.00px;top:808.06px;font-size:9.5px;line-height:9.5px;color:#111;transform:scaleX(1.0007);transform-origin:0 0;">0,00</div>
<div style="position:absolute;left:772.00px;top:818.60px;width:540.50px;height:1.00px;background:#505050;"></div>
<div class="t" style="left:777.60px;top:823.20px;font-size:6.5px;line-height:6.5px;color:#555;">Prestações de serviços de atividades xxxxxxxxxxxxxxxxxxxxxxxxxxxxxxxxxxxxxxxxxxx</div>
<div style="position:absolute;left:1178.50px;top:819.60px;width:17.10px;height:13.10px;background:#c9c9cb;border-left:1px solid #777;border-right:1px solid #777;box-sizing:border-box;"></div>
<div class="t" style="left:1293.00px;top:821.66px;font-size:9.5px;line-height:9.5px;color:#111;transform:scaleX(1.0007);transform-origin:0 0;">0,00</div>
<div style="position:absolute;left:772.00px;top:832.20px;width:540.50px;height:1.00px;background:#505050;"></div>
<div style="position:absolute;left:772.00px;top:832.70px;width:540.50px;height:13.60px;background:#c9c9cb;"></div>
<div class="t" style="left:900.00px;top:836.87px;font-size:7px;line-height:7px;font-weight:bold;color:#333;">RENDIMENTOS  COMERCIAIS E OUTROS</div>
<div style="position:absolute;left:772.00px;top:845.80px;width:540.50px;height:1.00px;background:#505050;"></div>
<div class="t" style="left:777.60px;top:850.40px;font-size:6.5px;line-height:6.5px;color:#555;">Prestações de serviços de atividades xxxxxxxxxxxxxxxxxxxxxxxxxxxxxxxxxxx</div>
<div style="position:absolute;left:1178.50px;top:846.80px;width:17.10px;height:13.10px;background:#c9c9cb;border-left:1px solid #777;border-right:1px solid #777;box-sizing:border-box;"></div>
<div class="t" style="left:1293.00px;top:848.86px;font-size:9.5px;line-height:9.5px;color:#111;transform:scaleX(1.0007);transform-origin:0 0;">0,00</div>
<div style="position:absolute;left:772.00px;top:859.40px;width:540.50px;height:1.00px;background:#505050;"></div>
<div class="t" style="left:777.60px;top:864.00px;font-size:6.5px;line-height:6.5px;color:#555;">Prestações de serviços de atividades xxxxxxxxxxxxxxxxxxxxxxxxxxxxxxxxxxxxxxxxxxxxx</div>
<div style="position:absolute;left:1178.50px;top:860.40px;width:17.10px;height:13.10px;background:#c9c9cb;border-left:1px solid #777;border-right:1px solid #777;box-sizing:border-box;"></div>
<div class="t" style="left:1293.00px;top:862.46px;font-size:9.5px;line-height:9.5px;color:#111;transform:scaleX(1.0007);transform-origin:0 0;">0,00</div>
<div style="position:absolute;left:772.00px;top:873.00px;width:540.50px;height:1.00px;background:#505050;"></div>
<div class="t" style="left:777.60px;top:877.60px;font-size:6.5px;line-height:6.5px;color:#555;">Prestações de serviços de atividades xxxxxxxxxxxxxxxxxxxxxxxxxxxxxxxxxxxxxxxxxx</div>
<div style="position:absolute;left:1178.50px;top:874.00px;width:17.10px;height:13.10px;background:#c9c9cb;border-left:1px solid #777;border-right:1px solid #777;box-sizing:border-box;"></div>
<div class="t" style="left:1293.00px;top:876.06px;font-size:9.5px;line-height:9.5px;color:#111;transform:scaleX(1.0007);transform-origin:0 0;">0,00</div>
<div style="position:absolute;left:772.00px;top:886.60px;width:540.50px;height:1.00px;background:#505050;"></div>
<div class="t" style="left:777.60px;top:891.20px;font-size:6.5px;line-height:6.5px;color:#555;">Prestações de serviços de atividades xxxxxxxxx</div>
<div style="position:absolute;left:1178.50px;top:887.60px;width:17.10px;height:13.10px;background:#c9c9cb;border-left:1px solid #777;border-right:1px solid #777;box-sizing:border-box;"></div>
<div class="t" style="left:1293.00px;top:889.66px;font-size:9.5px;line-height:9.5px;color:#111;transform:scaleX(1.0007);transform-origin:0 0;">0,00</div>
<div style="position:absolute;left:772.00px;top:900.20px;width:540.50px;height:1.00px;background:#505050;"></div>
<div class="t" style="left:777.60px;top:904.80px;font-size:6.5px;line-height:6.5px;color:#555;">Prestações de serviços de atividades xxxxxxxxxxxxxxxxxxxxxxxxxxxxxxxxxxxxxxxxxxx</div>
<div style="position:absolute;left:1178.50px;top:901.20px;width:17.10px;height:13.10px;background:#c9c9cb;border-left:1px solid #777;border-right:1px solid #777;box-sizing:border-box;"></div>
<div class="t" style="left:1293.00px;top:903.26px;font-size:9.5px;line-height:9.5px;color:#111;transform:scaleX(1.0007);transform-origin:0 0;">0,00</div>
<div style="position:absolute;left:772.00px;top:913.80px;width:540.50px;height:1.00px;background:#505050;"></div>
<div class="t" style="left:777.60px;top:918.40px;font-size:6.5px;line-height:6.5px;color:#555;">Prestações de serviços de atividades xxxxx</div>
<div style="position:absolute;left:1178.50px;top:914.80px;width:17.10px;height:13.10px;background:#c9c9cb;border-left:1px solid #777;border-right:1px solid #777;box-sizing:border-box;"></div>
<div class="t" style="left:1293.00px;top:916.86px;font-size:9.5px;line-height:9.5px;color:#111;transform:scaleX(1.0007);transform-origin:0 0;">0,00</div>
<div style="position:absolute;left:772.00px;top:927.40px;width:540.50px;height:1.00px;background:#505050;"></div>
<div style="position:absolute;left:772.00px;top:927.90px;width:540.50px;height:13.60px;background:#c9c9cb;"></div>
<div class="t" style="left:900.00px;top:932.07px;font-size:7px;line-height:7px;font-weight:bold;color:#333;">RENDIMENTOS  COMERCIAIS E OUTROS</div>
<div style="position:absolute;left:772.00px;top:941.00px;width:540.50px;height:1.00px;background:#505050;"></div>
<div class="t" style="left:777.60px;top:945.60px;font-size:6.5px;line-height:6.5px;color:#555;">Prestações de serviços de atividades xxxxxxxxxxxxxxxxxxxxxxxxxxxxxxxxxxxxxxxxxxxxxxxxxxxxxxxxxx</div>
<div style="position:absolute;left:1178.50px;top:942.00px;width:17.10px;height:13.10px;background:#c9c9cb;border-left:1px solid #777;border-right:1px solid #777;box-sizing:border-box;"></div>
<div class="t" style="left:1293.00px;top:944.06px;font-size:9.5px;line-height:9.5px;color:#111;transform:scaleX(1.0007);transform-origin:0 0;">0,00</div>
<div style="position:absolute;left:772.00px;top:954.60px;width:540.50px;height:1.00px;background:#505050;"></div>
<div class="t" style="left:777.60px;top:959.20px;font-size:6.5px;line-height:6.5px;color:#555;">Prestações de serviços de atividades xxxxxxxxxxxxxxxxxxxxxxxxxxxxxxxxxxx</div>
<div style="position:absolute;left:1178.50px;top:955.60px;width:17.10px;height:13.10px;background:#c9c9cb;border-left:1px solid #777;border-right:1px solid #777;box-sizing:border-box;"></div>
<div class="t" style="left:1293.00px;top:957.66px;font-size:9.5px;line-height:9.5px;color:#111;transform:scaleX(1.0007);transform-origin:0 0;">0,00</div>
<div style="position:absolute;left:772.00px;top:968.20px;width:540.50px;height:1.00px;background:#505050;"></div>
<div class="t" style="left:777.60px;top:972.80px;font-size:6.5px;line-height:6.5px;color:#555;">Prestações de serviços de atividades xxxxxxxxxxxxxxxxxxxxx</div>
<div style="position:absolute;left:1178.50px;top:969.20px;width:17.10px;height:13.10px;background:#c9c9cb;border-left:1px solid #777;border-right:1px solid #777;box-sizing:border-box;"></div>
<div class="t" style="left:1293.00px;top:971.26px;font-size:9.5px;line-height:9.5px;color:#111;transform:scaleX(1.0007);transform-origin:0 0;">0,00</div>
<div style="position:absolute;left:772.00px;top:981.80px;width:540.50px;height:1.00px;background:#505050;"></div>
<div class="t" style="left:777.60px;top:986.40px;font-size:6.5px;line-height:6.5px;color:#555;">Prestações de serviços de atividades xxxxxxxxxxxxxxxxxxxxxxxxxxxxxxxxxxxxxxxx</div>
<div style="position:absolute;left:1178.50px;top:982.80px;width:17.10px;height:13.10px;background:#c9c9cb;border-left:1px solid #777;border-right:1px solid #777;box-sizing:border-box;"></div>
<div class="t" style="left:1293.00px;top:984.86px;font-size:9.5px;line-height:9.5px;color:#111;transform:scaleX(1.0007);transform-origin:0 0;">0,00</div>
<div style="position:absolute;left:772.00px;top:995.40px;width:540.50px;height:1.00px;background:#505050;"></div>
<div class="t" style="left:777.60px;top:1000.00px;font-size:6.5px;line-height:6.5px;color:#555;">Prestações de serviços de atividades xxxxxxxxxxxxxxxxxxx</div>
<div style="position:absolute;left:1178.50px;top:996.40px;width:17.10px;height:13.10px;background:#c9c9cb;border-left:1px solid #777;border-right:1px solid #777;box-sizing:border-box;"></div>
<div class="t" style="left:1293.00px;top:998.46px;font-size:9.5px;line-height:9.5px;color:#111;transform:scaleX(1.0007);transform-origin:0 0;">0,00</div>
<div style="position:absolute;left:772.00px;top:1009.00px;width:540.50px;height:1.00px;background:#505050;"></div>
<div class="t" style="left:777.60px;top:1013.60px;font-size:6.5px;line-height:6.5px;color:#555;">Prestações de serviços de atividades xxxxxxxxxxxxxxxxx</div>
<div style="position:absolute;left:1178.50px;top:1010.00px;width:17.10px;height:13.10px;background:#c9c9cb;border-left:1px solid #777;border-right:1px solid #777;box-sizing:border-box;"></div>
<div class="t" style="left:1293.00px;top:1012.06px;font-size:9.5px;line-height:9.5px;color:#111;transform:scaleX(1.0007);transform-origin:0 0;">0,00</div>
<div style="position:absolute;left:772.00px;top:1022.60px;width:540.50px;height:1.00px;background:#505050;"></div>
<div style="position:absolute;left:772.00px;top:1023.10px;width:540.50px;height:13.60px;background:#c9c9cb;"></div>
<div class="t" style="left:900.00px;top:1027.27px;font-size:7px;line-height:7px;font-weight:bold;color:#333;">RENDIMENTOS  COMERCIAIS E OUTROS</div>
<div style="position:absolute;left:772.00px;top:1036.20px;width:540.50px;height:1.00px;background:#505050;"></div>
<div class="t" style="left:777.60px;top:1040.80px;font-size:6.5px;line-height:6.5px;color:#555;">Prestações de serviços de atividades xxxxxxxxxxxxxxxxxxxxxxxxxxxxxxxxxxxxxxxxxxxxxxxxxx</div>
<div style="position:absolute;left:1178.50px;top:1037.20px;width:17.10px;height:13.10px;background:#c9c9cb;border-left:1px solid #777;border-right:1px solid #777;box-sizing:border-box;"></div>
<div class="t" style="left:1293.00px;top:1039.26px;font-size:9.5px;line-height:9.5px;color:#111;transform:scaleX(1.0007);transform-origin:0 0;">0,00</div>
<div style="position:absolute;left:772.00px;top:1049.80px;width:540.50px;height:1.00px;background:#505050;"></div>
<div class="t" style="left:777.60px;top:1054.40px;font-size:6.5px;line-height:6.5px;color:#555;">Prestações de serviços de atividades xxxxxxxxxxxxxxxxxxxxxxxxxxxxxxxxxxx</div>
<div style="position:absolute;left:1178.50px;top:1050.80px;width:17.10px;height:13.10px;background:#c9c9cb;border-left:1px solid #777;border-right:1px solid #777;box-sizing:border-box;"></div>
<div class="t" style="left:1293.00px;top:1052.86px;font-size:9.5px;line-height:9.5px;color:#111;transform:scaleX(1.0007);transform-origin:0 0;">0,00</div>
<div style="position:absolute;left:772.00px;top:1063.40px;width:540.50px;height:1.00px;background:#505050;"></div>
<div class="t" style="left:777.60px;top:1068.00px;font-size:6.5px;line-height:6.5px;color:#555;">Prestações de serviços de atividades xxxxxxxxxxxxxxxxxxxxxxxxxxxxxxxxxxxxxxx</div>
<div style="position:absolute;left:1178.50px;top:1064.40px;width:17.10px;height:13.10px;background:#c9c9cb;border-left:1px solid #777;border-right:1px solid #777;box-sizing:border-box;"></div>
<div class="t" style="left:1293.00px;top:1066.46px;font-size:9.5px;line-height:9.5px;color:#111;transform:scaleX(1.0007);transform-origin:0 0;">0,00</div>
<div style="position:absolute;left:772.00px;top:1077.00px;width:540.50px;height:1.00px;background:#505050;"></div>
<div class="t" style="left:777.60px;top:1081.60px;font-size:6.5px;line-height:6.5px;color:#555;">Prestações de serviços de atividades xxxxxxxxxxxxxxxxxxxxxxxxxxxxxxxxxxxxxxxxxxxxxxxxxxxxxxxxxx</div>
<div style="position:absolute;left:1178.50px;top:1078.00px;width:17.10px;height:13.10px;background:#c9c9cb;border-left:1px solid #777;border-right:1px solid #777;box-sizing:border-box;"></div>
<div class="t" style="left:1293.00px;top:1080.06px;font-size:9.5px;line-height:9.5px;color:#111;transform:scaleX(1.0007);transform-origin:0 0;">0,00</div>
<div style="position:absolute;left:772.00px;top:1090.60px;width:540.50px;height:1.00px;background:#505050;"></div>
<div class="t" style="left:777.60px;top:1095.20px;font-size:6.5px;line-height:6.5px;color:#555;">Prestações de serviços de atividades xxxxxxxxxxxxxxxxxxxxxxxxxxxxxxxxxxxxxxxx</div>
<div style="position:absolute;left:1178.50px;top:1091.60px;width:17.10px;height:13.10px;background:#c9c9cb;border-left:1px solid #777;border-right:1px solid #777;box-sizing:border-box;"></div>
<div class="t" style="left:1293.00px;top:1093.66px;font-size:9.5px;line-height:9.5px;color:#111;transform:scaleX(1.0007);transform-origin:0 0;">0,00</div>
<div style="position:absolute;left:772.00px;top:1104.20px;width:540.50px;height:1.00px;background:#505050;"></div>
<div class="t" style="left:777.60px;top:1108.80px;font-size:6.5px;line-height:6.5px;color:#555;">Prestações de serviços de atividades xxxxxxxxxxxxxxxxxxxxxxxxxxxxxxxxxxx</div>
<div style="position:absolute;left:1178.50px;top:1105.20px;width:17.10px;height:13.10px;background:#c9c9cb;border-left:1px solid #777;border-right:1px solid #777;box-sizing:border-box;"></div>
<div class="t" style="left:1293.00px;top:1107.26px;font-size:9.5px;line-height:9.5px;color:#111;transform:scaleX(1.0007);transform-origin:0 0;">0,00</div>
<div style="position:absolute;left:772.00px;top:1117.80px;width:540.50px;height:1.00px;background:#505050;"></div>
<div class="t" style="left:777.60px;top:1122.40px;font-size:6.5px;line-height:6.5px;color:#555;">Prestações de serviços de atividades xxxxxxxxxxxxxxxxxxxxxxxxxxxxxx</div>
<div style="position:absolute;left:1178.50px;top:1118.80px;width:17.10px;height:13.10px;background:#c9c9cb;border-left:1px solid #777;border-right:1px solid #777;box-sizing:border-box;"></div>
<div class="t" style="left:1293.00px;top:1120.86px;font-size:9.5px;line-height:9.5px;color:#111;transform:scaleX(1.0007);transform-origin:0 0;">0,00</div>
<div style="position:absolute;left:772.00px;top:1131.40px;width:540.50px;height:1.00px;background:#505050;"></div>
<div style="position:absolute;left:769.00px;top:1143.00px;width:546.50px;height:7.00px;background:#111;"></div></div></div>
<div style="position:absolute;left:601.00px;top:433.30px;width:60.00px;height:84.00px;background:#fff;"></div>
<div style="position:absolute;left:604.00px;top:435.30px;width:54.00px;height:76.00px;box-sizing:border-box;border:0.7px solid #c4c4c4;"></div>
<div style="position:absolute;left:604.00px;top:435.60px;width:54.00px;height:6.00px;background:#dcdcdc;"></div>
<div style="position:absolute;left:632.00px;top:436.30px;width:10.00px;height:3.00px;background:repeating-linear-gradient(90deg,#555 0 1px,#fff 1px 3px);"></div>
<div style="position:absolute;left:604.00px;top:442.80px;width:54.00px;height:0.60px;background:#c4c4c4;"></div>
<div style="position:absolute;left:604.00px;top:446.30px;width:54.00px;height:0.60px;background:#c4c4c4;"></div>
<div style="position:absolute;left:604.00px;top:450.30px;width:54.00px;height:0.60px;background:#c4c4c4;"></div>
<div style="position:absolute;left:604.00px;top:453.80px;width:54.00px;height:0.60px;background:#c4c4c4;"></div>
<div style="position:absolute;left:604.00px;top:457.30px;width:54.00px;height:0.60px;background:#c4c4c4;"></div>
<div style="position:absolute;left:604.00px;top:462.30px;width:54.00px;height:0.60px;background:#c4c4c4;"></div>
<div style="position:absolute;left:604.00px;top:466.30px;width:54.00px;height:0.60px;background:#c4c4c4;"></div>
<div style="position:absolute;left:604.00px;top:471.30px;width:54.00px;height:0.60px;background:#c4c4c4;"></div>
<div style="position:absolute;left:604.00px;top:475.30px;width:54.00px;height:0.60px;background:#c4c4c4;"></div>
<div style="position:absolute;left:604.00px;top:479.30px;width:54.00px;height:0.60px;background:#c4c4c4;"></div>
<div style="position:absolute;left:604.00px;top:483.30px;width:54.00px;height:0.60px;background:#c4c4c4;"></div>
<div style="position:absolute;left:604.00px;top:488.30px;width:54.00px;height:0.60px;background:#c4c4c4;"></div>
<div style="position:absolute;left:604.00px;top:492.30px;width:54.00px;height:0.60px;background:#c4c4c4;"></div>
<div style="position:absolute;left:604.00px;top:496.30px;width:54.00px;height:0.60px;background:#c4c4c4;"></div>
<div style="position:absolute;left:604.00px;top:499.30px;width:54.00px;height:0.60px;background:#c4c4c4;"></div>
<div style="position:absolute;left:608.00px;top:444.30px;width:15.00px;height:0.70px;background:#d0d0d0;"></div>
<div style="position:absolute;left:638.00px;top:444.30px;width:6.00px;height:0.70px;background:#d0d0d0;"></div>
<div style="position:absolute;left:658.00px;top:444.30px;width:3.00px;height:0.70px;background:#d0d0d0;"></div>
<div style="position:absolute;left:626.00px;top:449.30px;width:25.00px;height:0.70px;background:#d0d0d0;"></div>
<div style="position:absolute;left:609.00px;top:459.30px;width:12.00px;height:0.70px;background:#d0d0d0;"></div>
<div style="position:absolute;left:609.00px;top:464.30px;width:42.00px;height:0.70px;background:#d0d0d0;"></div>
<div style="position:absolute;left:609.00px;top:469.30px;width:37.00px;height:0.70px;background:#d0d0d0;"></div>
<div style="position:absolute;left:609.00px;top:473.30px;width:32.00px;height:0.70px;background:#d0d0d0;"></div>
<div style="position:absolute;left:609.00px;top:478.30px;width:37.00px;height:0.70px;background:#d0d0d0;"></div>
<div style="position:absolute;left:609.00px;top:485.30px;width:22.00px;height:0.70px;background:#d0d0d0;"></div>
<div style="position:absolute;left:609.00px;top:490.30px;width:36.00px;height:0.70px;background:#d0d0d0;"></div>
<div style="position:absolute;left:609.00px;top:494.30px;width:32.00px;height:0.70px;background:#d0d0d0;"></div>
<div style="position:absolute;left:623.00px;top:455.30px;width:18.00px;height:5.00px;background:repeating-linear-gradient(90deg,#666 0 1px,#fff 1px 3px);opacity:.8"></div>
<div style="position:absolute;left:641.00px;top:455.30px;width:13.00px;height:5.00px;background:repeating-linear-gradient(90deg,#888 0 1px,#fff 1px 2.5px);opacity:.7"></div>
<div style="position:absolute;left:603.00px;top:502.00px;width:56.00px;height:1.00px;background:#111;"></div>
<div style="position:absolute;left:603.00px;top:504.20px;width:56.00px;height:0.60px;background:#111;"></div>
<div style="position:absolute;left:603.00px;top:505.30px;width:33.00px;height:4.30px;background:repeating-linear-gradient(90deg,#222 0 2px,#fff 2px 4px);"></div>
<div style="position:absolute;left:603.00px;top:510.20px;width:56.00px;height:0.80px;background:#111;"></div>
<div style="position:absolute;left:601.00px;top:546.70px;width:60.00px;height:84.00px;background:#fff;"></div>
<div style="position:absolute;left:603.00px;top:551.30px;width:8.00px;height:1.10px;background:#555;"></div>
<div style="position:absolute;left:603.00px;top:553.20px;width:56.00px;height:0.80px;background:#111;"></div>
<div style="position:absolute;left:603.00px;top:554.60px;width:34.00px;height:0.40px;background:#777;"></div>
<div style="position:absolute;left:603.00px;top:555.10px;width:56.00px;height:0.90px;background:#111;"></div>
<div style="position:absolute;left:603.00px;top:557.90px;width:18.00px;height:0.70px;background:#444;"></div>
<div style="position:absolute;left:603.00px;top:561.00px;width:57.00px;height:4.00px;background:repeating-linear-gradient(90deg,#333 0 1.5px,#8a6a9a 1.5px 2px,#fff 2px 3px);opacity:.85"></div>
<div style="position:absolute;left:603.00px;top:566.00px;width:56.00px;height:1.10px;background:#777;opacity:.7"></div>
<div style="position:absolute;left:603.00px;top:568.20px;width:56.00px;height:0.80px;background:#111;"></div>
<div style="position:absolute;left:603.00px;top:569.80px;width:50.00px;height:1.20px;background:#333;"></div>
<div style="position:absolute;left:603.00px;top:572.00px;width:50.00px;height:1.10px;background:#333;"></div>
<div style="position:absolute;left:603.00px;top:573.40px;width:56.00px;height:6.20px;background:#111;"></div>
<div style="position:absolute;left:603.60px;top:574.20px;width:37.00px;height:1.10px;background:#fff;"></div>
<div style="position:absolute;left:642.20px;top:574.20px;width:15.80px;height:2.70px;background:#fff;"></div>
<div style="position:absolute;left:603.00px;top:628.00px;width:56.00px;height:1.70px;background:#222;"></div>
<div style="position:absolute;left:698px;top:288px;width:668px;height:452px;overflow:hidden;"><div style="position:absolute;left:-698px;top:-288px;width:1440px;height:864px;"><div style="position:absolute;left:723.00px;top:311.00px;width:619.00px;height:889.00px;background:#fff;"></div>
<div style="position:absolute;left:751.40px;top:333.60px;width:14.00px;height:197.40px;box-sizing:border-box;border:1px solid #555;border-radius:2px;"></div>
<div class="t" style="left:758.5px;top:522px;font-size:8px;line-height:8px;font-weight:bold;color:#222;transform-origin:0 0;transform:rotate(-90deg) scaleX(0.8922) translateY(-4px);">MODELO EM VIGOR A PARTIR DE JANEIRO DE 2021</div>
<div style="position:absolute;left:769.00px;top:334.00px;width:546.50px;height:566.00px;box-sizing:border-box;border:1.3px solid #555;"></div>
<div style="position:absolute;left:771.70px;top:336.80px;width:145.00px;height:83.70px;box-sizing:border-box;border:1px solid #505050;background:transparent;"></div>
<div class="t" style="left:827.00px;top:347.27px;font-size:5px;line-height:5px;color:#666;">R.</div>
<div class="t" style="left:855.00px;top:347.27px;font-size:5px;line-height:5px;color:#666;">P.</div>
<svg style="position:absolute;left:837px;top:341px" width="14" height="17" viewBox="0 0 14 17"><ellipse cx="7" cy="8" rx="5.5" ry="6.5" fill="#e8e8e8" stroke="#777" stroke-width="1"/><ellipse cx="7" cy="8" rx="3" ry="3.6" fill="none" stroke="#888" stroke-width=".8"/><path d="M3 14 Q7 17 11 14" stroke="#888" fill="none"/></svg>
<div class="t" style="left:794.00px;top:363.70px;font-size:6.5px;line-height:6.5px;font-weight:bold;color:#333;transform:scaleX(1.1257);transform-origin:0 0;">MINISTÉRIO DAS FINANÇAS</div>
<div class="t" style="left:782.00px;top:373.90px;font-size:6.5px;line-height:6.5px;font-weight:bold;color:#333;transform:scaleX(0.9451);transform-origin:0 0;">AUTORIDADE TRIBUTÁRIA E ADUANEIRA</div>
<div class="t" style="left:786.50px;top:384.10px;font-size:6.5px;line-height:6.5px;color:#555;transform:scaleX(0.9454);transform-origin:0 0;">DECLARAÇÃO DE RENDIMENTOS - IRS</div>
<svg style="position:absolute;left:802px;top:398px" width="28" height="17" viewBox="0 0 28 17"><path d="M3 2h8l-4 14h-6z" fill="#111"/><path d="M10 2h9l-1 4h-3l-3 10h-4l3-10h-2z" fill="#111"/><circle cx="23.5" cy="4.5" r="2.8" fill="#111"/></svg>
<div class="t" style="left:841.00px;top:398.70px;font-size:6.5px;line-height:6.5px;color:#555;transform:scaleX(1.1159);transform-origin:0 0;white-space:pre;">MODELO  3</div>
<div class="t" style="left:841.00px;top:407.32px;font-size:8.6px;line-height:8.6px;font-weight:bold;color:#222;transform:scaleX(1.1181);transform-origin:0 0;">Anexo B</div>
<div style="position:absolute;left:920.10px;top:336.60px;width:243.70px;height:83.80px;box-sizing:border-box;border:1px solid #505050;background:transparent;"></div>
<div style="position:absolute;left:934.30px;top:337.60px;width:228.50px;height:18.90px;background:#c9c9cb;"></div>
<div style="position:absolute;left:920.10px;top:356.00px;width:243.70px;height:1.00px;background:#505050;"></div>
<div style="position:absolute;left:920.10px;top:336.60px;width:14.20px;height:20.40px;box-sizing:border-box;border:1px solid #505050;background:transparent;"></div>
<div class="t" style="left:925.50px;top:344.00px;font-size:6.5px;line-height:6.5px;font-weight:bold;color:#222;">1</div>
<div class="t" style="left:990.00px;top:338.97px;font-size:7px;line-height:7px;font-weight:bold;color:#333;transform:scaleX(1.0216);transform-origin:0 0;white-space:pre;">RENDIMENTOS DA CATEGORIA  B</div>
<div class="t" style="left:981.40px;top:347.37px;font-size:7px;line-height:7px;font-weight:bold;color:#333;transform:scaleX(1.0228);transform-origin:0 0;">REGIME SIMPLIFICADO / ATO ISOLADO</div>
<div class="t" style="left:963.90px;top:364.20px;font-size:6.5px;line-height:6.5px;color:#555;transform:scaleX(1.0211);transform-origin:0 0;">Regime simplificado de tributação</div>
<div style="position:absolute;left:1091.20px;top:362.40px;width:20.70px;height:10.20px;box-sizing:border-box;border:1px solid #6a6a6a;background:#fff;"></div><div style="position:absolute;left:1091.20px;top:362.40px;width:10.50px;height:10.20px;box-sizing:border-box;border:1px solid #6a6a6a;background:#c9c9cb;"></div><div class="t" style="left:1092.80px;top:364.70px;font-size:6.5px;line-height:6.5px;font-weight:bold;color:#333;">01</div>
<div class="t" style="left:963.90px;top:378.20px;font-size:6.5px;line-height:6.5px;color:#555;">Ato isolado</div>
<div style="position:absolute;left:1091.20px;top:376.47px;width:20.70px;height:10.20px;box-sizing:border-box;border:1px solid #6a6a6a;background:#fff;"></div><div style="position:absolute;left:1091.20px;top:376.47px;width:10.50px;height:10.20px;box-sizing:border-box;border:1px solid #6a6a6a;background:#c9c9cb;"></div><div class="t" style="left:1092.80px;top:378.77px;font-size:6.5px;line-height:6.5px;font-weight:bold;color:#333;">02</div>
<div class="t" style="left:963.90px;top:392.30px;font-size:6.5px;line-height:6.5px;color:#555;transform:scaleX(1.0175);transform-origin:0 0;">Profissionais, comerciais e industriais</div>
<div style="position:absolute;left:1091.20px;top:390.54px;width:20.70px;height:10.20px;box-sizing:border-box;border:1px solid #6a6a6a;background:#fff;"></div><div style="position:absolute;left:1091.20px;top:390.54px;width:10.50px;height:10.20px;box-sizing:border-box;border:1px solid #6a6a6a;background:#c9c9cb;"></div><div class="t" style="left:1092.80px;top:392.84px;font-size:6.5px;line-height:6.5px;font-weight:bold;color:#333;">03</div>
<div class="t" style="left:1103.00px;top:393.07px;font-size:10px;line-height:10px;font-weight:bold;color:#000;">X</div>
<div class="t" style="left:963.90px;top:406.50px;font-size:6.5px;line-height:6.5px;color:#555;transform:scaleX(1.0175);transform-origin:0 0;">Agrícolas, silvícolas e pecuários</div>
<div style="position:absolute;left:1091.20px;top:404.61px;width:20.70px;height:10.20px;box-sizing:border-box;border:1px solid #6a6a6a;background:#fff;"></div><div style="position:absolute;left:1091.20px;top:404.61px;width:10.50px;height:10.20px;box-sizing:border-box;border:1px solid #6a6a6a;background:#c9c9cb;"></div><div class="t" style="left:1092.80px;top:406.91px;font-size:6.5px;line-height:6.5px;font-weight:bold;color:#333;">04</div>
<div class="t" style="left:1103.00px;top:407.14px;font-size:10px;line-height:10px;font-weight:bold;color:#000;">X</div>
<div style="position:absolute;left:1167.40px;top:336.70px;width:145.10px;height:83.80px;box-sizing:border-box;border:1px solid #505050;background:transparent;"></div>
<div style="position:absolute;left:1182.40px;top:337.70px;width:129.10px;height:18.70px;background:#c9c9cb;"></div>
<div style="position:absolute;left:1167.40px;top:355.90px;width:145.10px;height:1.00px;background:#505050;"></div>
<div style="position:absolute;left:1167.40px;top:336.70px;width:15.00px;height:20.30px;box-sizing:border-box;border:1px solid #505050;background:transparent;"></div>
<div class="t" style="left:1172.50px;top:344.00px;font-size:6.5px;line-height:6.5px;font-weight:bold;color:#222;">2</div>
<div class="t" style="left:1203.00px;top:343.07px;font-size:7px;line-height:7px;font-weight:bold;color:#333;transform:scaleX(1.0207);transform-origin:0 0;">ANO DOS RENDIMENTOS</div>
<div style="position:absolute;left:1204.30px;top:383.00px;width:71.45px;height:13.50px;box-sizing:border-box;border:1px solid #6a6a6a;background:#fff;"></div><div style="position:absolute;left:1204.30px;top:383.00px;width:12.70px;height:13.50px;box-sizing:border-box;border:1px solid #6a6a6a;background:#c9c9cb;"></div><div class="t" style="left:1205.90px;top:388.60px;font-size:6.5px;line-height:6.5px;font-weight:bold;color:#333;">01</div><div class="t" style="left:1233.00px;top:385.46px;font-size:9.5px;line-height:9.5px;color:#111;transform:scaleX(1.1073);transform-origin:0 0;">2021</div>
<div style="position:absolute;left:772.00px;top:423.90px;width:540.50px;height:13.10px;box-sizing:border-box;border:1px solid #505050;background:transparent;"></div>
<div style="position:absolute;left:785.80px;top:424.90px;width:525.70px;height:11.70px;background:#c9c9cb;"></div>
<div style="position:absolute;left:772.00px;top:423.90px;width:13.80px;height:13.10px;box-sizing:border-box;border:1px solid #505050;background:transparent;"></div>
<div class="t" style="left:776.50px;top:428.00px;font-size:6.5px;line-height:6.5px;font-weight:bold;color:#222;">3</div>
<div class="t" style="left:967.50px;top:426.87px;font-size:7px;line-height:7px;font-weight:bold;color:#333;transform:scaleX(1.0214);transform-origin:0 0;">IDENTIFICAÇÃO DO(S) SUJEITO(S) PASSIVO(S)</div>
<div style="position:absolute;left:772.00px;top:437.00px;width:1.00px;height:104.00px;background:#505050;"></div>
<div style="position:absolute;left:1311.50px;top:437.00px;width:1.00px;height:104.00px;background:#505050;"></div>
<div class="t" style="left:777.50px;top:444.50px;font-size:6.5px;line-height:6.5px;color:#555;">Sujeito passivo </div>
<div class="t" style="left:823.02px;top:444.50px;font-size:6.5px;line-height:6.5px;font-weight:bold;color:#333;">A</div>
<div class="t" style="left:829.00px;top:444.50px;font-size:6.5px;line-height:6.5px;color:#555;white-space:pre;"> -  NIF</div>
<div style="position:absolute;left:855.30px;top:440.80px;width:13.90px;height:11.80px;box-sizing:border-box;border:1px solid #6a6a6a;background:#fff;"></div><div style="position:absolute;left:855.30px;top:440.80px;width:13.90px;height:11.80px;box-sizing:border-box;border:1px solid #6a6a6a;background:#c9c9cb;"></div><div class="t" style="left:856.90px;top:444.70px;font-size:6.5px;line-height:6.5px;font-weight:bold;color:#333;">01</div>
<div style="position:absolute;left:869.20px;top:452.00px;width:130.80px;height:0.80px;background:#666;"></div>
<div style="position:absolute;left:880.00px;top:450.50px;width:1.00px;height:2.30px;background:#666;"></div>
<div style="position:absolute;left:890.80px;top:450.50px;width:1.00px;height:2.30px;background:#666;"></div>
<div style="position:absolute;left:901.60px;top:450.50px;width:1.00px;height:2.30px;background:#666;"></div>
<div style="position:absolute;left:912.40px;top:450.50px;width:1.00px;height:2.30px;background:#666;"></div>
<div style="position:absolute;left:923.20px;top:450.50px;width:1.00px;height:2.30px;background:#666;"></div>
<div style="position:absolute;left:934.00px;top:450.50px;width:1.00px;height:2.30px;background:#666;"></div>
<div style="position:absolute;left:944.80px;top:450.50px;width:1.00px;height:2.30px;background:#666;"></div>
<div style="position:absolute;left:955.60px;top:450.50px;width:1.00px;height:2.30px;background:#666;"></div>
<div style="position:absolute;left:966.40px;top:450.50px;width:1.00px;height:2.30px;background:#666;"></div>
<div style="position:absolute;left:977.20px;top:450.50px;width:1.00px;height:2.30px;background:#666;"></div>
<div style="position:absolute;left:988.00px;top:450.50px;width:1.00px;height:2.30px;background:#666;"></div>
<div style="position:absolute;left:998.80px;top:450.50px;width:1.00px;height:2.30px;background:#666;"></div>
<div class="t" style="left:1077.00px;top:444.50px;font-size:6.5px;line-height:6.5px;color:#555;">Sujeito passivo </div>
<div class="t" style="left:1122.52px;top:444.50px;font-size:6.5px;line-height:6.5px;font-weight:bold;color:#333;">B</div>
<div class="t" style="left:1128.86px;top:444.50px;font-size:6.5px;line-height:6.5px;color:#555;white-space:pre;"> -  NIF</div>
<div style="position:absolute;left:1155.30px;top:441.00px;width:13.30px;height:11.60px;box-sizing:border-box;border:1px solid #6a6a6a;background:#fff;"></div><div style="position:absolute;left:1155.30px;top:441.00px;width:13.30px;height:11.60px;box-sizing:border-box;border:1px solid #6a6a6a;background:#c9c9cb;"></div><div class="t" style="left:1156.90px;top:444.70px;font-size:6.5px;line-height:6.5px;font-weight:bold;color:#333;">02</div>
<div style="position:absolute;left:1168.60px;top:452.00px;width:131.40px;height:0.80px;background:#666;"></div>
<div style="position:absolute;left:1180.00px;top:450.50px;width:1.00px;height:2.30px;background:#666;"></div>
<div style="position:absolute;left:1190.80px;top:450.50px;width:1.00px;height:2.30px;background:#666;"></div>
<div style="position:absolute;left:1201.60px;top:450.50px;width:1.00px;height:2.30px;background:#666;"></div>
<div style="position:absolute;left:1212.40px;top:450.50px;width:1.00px;height:2.30px;background:#666;"></div>
<div style="position:absolute;left:1223.20px;top:450.50px;width:1.00px;height:2.30px;background:#666;"></div>
<div style="position:absolute;left:1234.00px;top:450.50px;width:1.00px;height:2.30px;background:#666;"></div>
<div style="position:absolute;left:1244.80px;top:450.50px;width:1.00px;height:2.30px;background:#666;"></div>
<div style="position:absolute;left:1255.60px;top:450.50px;width:1.00px;height:2.30px;background:#666;"></div>
<div style="position:absolute;left:1266.40px;top:450.50px;width:1.00px;height:2.30px;background:#666;"></div>
<div style="position:absolute;left:1277.20px;top:450.50px;width:1.00px;height:2.30px;background:#666;"></div>
<div style="position:absolute;left:1288.00px;top:450.50px;width:1.00px;height:2.30px;background:#666;"></div>
<div style="position:absolute;left:1298.80px;top:450.50px;width:1.00px;height:2.30px;background:#666;"></div>
<div style="position:absolute;left:1306.50px;top:456.10px;width:5.50px;height:1.00px;background:#505050;"></div>
<div style="position:absolute;left:772.00px;top:456.00px;width:13.80px;height:14.00px;box-sizing:border-box;border:1px solid #505050;background:transparent;"></div>
<div style="position:absolute;left:785.80px;top:455.80px;width:7.80px;height:1.00px;background:#505050;"></div>
<div class="t" style="left:776.50px;top:461.00px;font-size:6.5px;line-height:6.5px;font-weight:bold;color:#222;">A</div>
<div class="t" style="left:996.40px;top:457.98px;font-size:9px;line-height:9px;font-weight:bold;color:#111;transform:scaleX(1.1572);transform-origin:0 0;">Empresa testes_ Elsa</div>
<div style="position:absolute;left:772.00px;top:469.10px;width:540.50px;height:1.00px;background:#505050;"></div>
<div class="t" style="left:777.50px;top:476.90px;font-size:6.5px;line-height:6.5px;color:#555;transform:scaleX(1.0288);transform-origin:0 0;">Este anexo respeita à atividade de herança indivisa?</div>
<div class="t" style="left:947.70px;top:476.90px;font-size:6.5px;line-height:6.5px;color:#555;">Sim</div>
<div style="position:absolute;left:963.30px;top:473.40px;width:26.40px;height:12.20px;box-sizing:border-box;border:1px solid #6a6a6a;background:#fff;"></div><div style="position:absolute;left:963.30px;top:473.40px;width:13.20px;height:12.20px;box-sizing:border-box;border:1px solid #6a6a6a;background:#c9c9cb;"></div><div class="t" style="left:964.90px;top:477.70px;font-size:6.5px;line-height:6.5px;font-weight:bold;color:#333;">03</div>
<div class="t" style="left:1005.60px;top:476.90px;font-size:6.5px;line-height:6.5px;color:#555;">Não</div>
<div style="position:absolute;left:1023.30px;top:473.40px;width:26.10px;height:12.20px;box-sizing:border-box;border:1px solid #6a6a6a;background:#fff;"></div><div style="position:absolute;left:1023.30px;top:473.40px;width:13.10px;height:12.20px;box-sizing:border-box;border:1px solid #6a6a6a;background:#c9c9cb;"></div><div class="t" style="left:1024.90px;top:477.70px;font-size:6.5px;line-height:6.5px;font-weight:bold;color:#333;">04</div>
<div class="t" style="left:1065.30px;top:476.90px;font-size:6.5px;line-height:6.5px;color:#555;">Se assinalou </div>
<div class="t" style="left:1105.49px;top:476.90px;font-size:6.5px;line-height:6.5px;font-weight:bold;color:#333;">SIM</div>
<div class="t" style="left:1118.91px;top:476.90px;font-size:6.5px;line-height:6.5px;color:#555;white-space:pre;">,  indique o NIF da herança indivisa</div>
<div class="t" style="left:796.25px;top:493.90px;font-size:6.5px;line-height:6.5px;color:#555;transform:scaleX(1.0281);transform-origin:0 0;">NIF do titular</div>
<div style="position:absolute;left:846.60px;top:490.40px;width:144.10px;height:12.20px;box-sizing:border-box;border:1px solid #6a6a6a;background:#fff;border-top-color:transparent;"></div><div style="position:absolute;left:846.60px;top:490.40px;width:12.15px;height:12.20px;box-sizing:border-box;border:1px solid #6a6a6a;background:#c9c9cb;"></div><div class="t" style="left:848.20px;top:494.70px;font-size:6.5px;line-height:6.5px;font-weight:bold;color:#333;">05</div><div class="t" style="left:897.30px;top:491.36px;font-size:9.5px;line-height:9.5px;color:#111;transform:scaleX(1.1168);transform-origin:0 0;">505868580</div>
<div class="t" style="left:1046.80px;top:493.90px;font-size:6.5px;line-height:6.5px;color:#555;transform:scaleX(1.0281);transform-origin:0 0;">NIF da herança indivisa</div>
<div style="position:absolute;left:1129.20px;top:491.00px;width:143.60px;height:11.60px;box-sizing:border-box;border:1px solid #6a6a6a;background:#fff;"></div><div style="position:absolute;left:1129.20px;top:491.00px;width:13.10px;height:11.60px;box-sizing:border-box;border:1px solid #6a6a6a;background:#c9c9cb;"></div><div class="t" style="left:1130.80px;top:494.70px;font-size:6.5px;line-height:6.5px;font-weight:bold;color:#333;">06</div><div style="position:absolute;left:1156.30px;top:497.60px;width:0.80px;height:5.00px;background:#555;"></div><div style="position:absolute;left:1170.90px;top:497.60px;width:0.80px;height:5.00px;background:#555;"></div><div style="position:absolute;left:1185.60px;top:497.60px;width:0.80px;height:5.00px;background:#555;"></div><div style="position:absolute;left:1200.20px;top:497.60px;width:0.80px;height:5.00px;background:#555;"></div><div style="position:absolute;left:1214.60px;top:497.60px;width:0.80px;height:5.00px;background:#555;"></div><div style="position:absolute;left:1229.20px;top:497.60px;width:0.80px;height:5.00px;background:#555;"></div><div style="position:absolute;left:1243.90px;top:497.60px;width:0.80px;height:5.00px;background:#555;"></div><div style="position:absolute;left:1258.10px;top:497.60px;width:0.80px;height:5.00px;background:#555;"></div>
<div class="t" style="left:783.20px;top:507.50px;font-size:6.5px;line-height:6.5px;color:#555;transform:scaleX(1.0252);transform-origin:0 0;">Código da tabela de atividades</div>
<div class="t" style="left:800.60px;top:515.60px;font-size:6.5px;line-height:6.5px;color:#555;transform:scaleX(1.0261);transform-origin:0 0;">art.º 151.º do CIRS</div>
<div style="position:absolute;left:791.90px;top:524.60px;width:71.70px;height:11.65px;box-sizing:border-box;border:1px solid #6a6a6a;background:#fff;border-top-color:transparent;"></div><div style="position:absolute;left:791.90px;top:524.60px;width:11.60px;height:11.65px;box-sizing:border-box;border:1px solid #6a6a6a;background:#c9c9cb;"></div><div class="t" style="left:793.50px;top:528.35px;font-size:6.5px;line-height:6.5px;font-weight:bold;color:#333;">07</div><div class="t" style="left:820.20px;top:526.16px;font-size:9.5px;line-height:9.5px;color:#111;transform:scaleX(1.1263);transform-origin:0 0;">4015</div>
<div class="t" style="left:1006.00px;top:507.50px;font-size:6.5px;line-height:6.5px;color:#555;transform:scaleX(1.0288);transform-origin:0 0;">Código CAE</div>
<div class="t" style="left:952.50px;top:515.50px;font-size:6.5px;line-height:6.5px;color:#555;transform:scaleX(0.9524);transform-origin:0 0;">(Rendimentos profissionais, comerciais e industriais)</div>
<div style="position:absolute;left:979.60px;top:524.60px;width:85.70px;height:11.65px;box-sizing:border-box;border:1px solid #6a6a6a;background:#fff;border-top-color:transparent;"></div><div style="position:absolute;left:979.60px;top:524.60px;width:12.10px;height:11.65px;box-sizing:border-box;border:1px solid #6a6a6a;background:#c9c9cb;"></div><div class="t" style="left:981.20px;top:528.35px;font-size:6.5px;line-height:6.5px;font-weight:bold;color:#333;">08</div><div class="t" style="left:1013.30px;top:525.96px;font-size:9.5px;line-height:9.5px;color:#111;transform:scaleX(1.1669);transform-origin:0 0;">35113</div>
<div class="t" style="left:1213.00px;top:508.10px;font-size:6.5px;line-height:6.5px;color:#555;transform:scaleX(1.0065);transform-origin:0 0;">Código CAE</div>
<div class="t" style="left:1166.60px;top:515.00px;font-size:6.5px;line-height:6.5px;color:#555;transform:scaleX(0.9487);transform-origin:0 0;">(Rendimentos agrícolas, silvícolas e pecuários)</div>
<div style="position:absolute;left:1186.20px;top:524.80px;width:85.60px;height:11.70px;box-sizing:border-box;border:1px solid #6a6a6a;background:#fff;border-top-color:transparent;"></div><div style="position:absolute;left:1186.20px;top:524.80px;width:12.40px;height:11.70px;box-sizing:border-box;border:1px solid #6a6a6a;background:#c9c9cb;"></div><div class="t" style="left:1187.80px;top:528.60px;font-size:6.5px;line-height:6.5px;font-weight:bold;color:#333;">09</div><div class="t" style="left:1220.30px;top:525.86px;font-size:9.5px;line-height:9.5px;color:#111;transform:scaleX(1.0941);transform-origin:0 0;">35210</div>
<div style="position:absolute;left:772.00px;top:540.20px;width:540.50px;height:1.60px;background:#505050;"></div>
<div style="position:absolute;left:772.00px;top:541.00px;width:13.40px;height:15.50px;box-sizing:border-box;border:1px solid #505050;background:transparent;"></div>
<div class="t" style="left:776.50px;top:546.50px;font-size:6.5px;line-height:6.5px;font-weight:bold;color:#222;">B</div>
<div class="t" style="left:937.00px;top:545.27px;font-size:7px;line-height:7px;color:#444;transform:scaleX(1.0145);transform-origin:0 0;">POSSUI ESTABELECIMENTO ESTÁVEL?</div>
<div class="t" style="left:1105.90px;top:546.00px;font-size:6.5px;line-height:6.5px;color:#555;">Sim</div>
<div style="position:absolute;left:1122.00px;top:542.40px;width:25.40px;height:12.10px;box-sizing:border-box;border:1px solid #6a6a6a;background:#fff;"></div><div style="position:absolute;left:1122.00px;top:542.40px;width:12.70px;height:12.10px;box-sizing:border-box;border:1px solid #6a6a6a;background:#c9c9cb;"></div><div class="t" style="left:1123.60px;top:546.60px;font-size:6.5px;line-height:6.5px;font-weight:bold;color:#333;">10</div>
<div class="t" style="left:1177.00px;top:546.00px;font-size:6.5px;line-height:6.5px;color:#555;">Não</div>
<div style="position:absolute;left:1192.50px;top:542.40px;width:25.70px;height:12.10px;box-sizing:border-box;border:1px solid #6a6a6a;background:#fff;"></div><div style="position:absolute;left:1192.50px;top:542.40px;width:13.30px;height:12.10px;box-sizing:border-box;border:1px solid #6a6a6a;background:#c9c9cb;"></div><div class="t" style="left:1194.10px;top:546.60px;font-size:6.5px;line-height:6.5px;font-weight:bold;color:#333;">11</div>
<div style="position:absolute;left:1311.50px;top:541.00px;width:1.00px;height:119.00px;background:#505050;"></div>
<div style="position:absolute;left:772.00px;top:555.70px;width:540.50px;height:1.60px;background:#505050;"></div>
<div style="position:absolute;left:772.00px;top:556.50px;width:13.40px;height:13.00px;box-sizing:border-box;border:1px solid #505050;background:transparent;"></div>
<div class="t" style="left:776.50px;top:561.00px;font-size:6.5px;line-height:6.5px;font-weight:bold;color:#222;">C</div>
<div class="t" style="left:924.80px;top:559.67px;font-size:7px;line-height:7px;color:#444;transform:scaleX(1.0227);transform-origin:0 0;">REGIME FISCAL APLICÁVEL A EX-RESIDENTES (ARTIGO 12.º-A DO CIRS)</div>
<div style="position:absolute;left:772.00px;top:569.00px;width:540.50px;height:1.00px;background:#505050;"></div>
<div class="t" style="left:777.60px;top:570.40px;font-size:6.5px;line-height:6.5px;color:#555;transform:scaleX(1.0156);transform-origin:0 0;">Se reúne os pressupostos e condições previstos nos n.ºs 1 e 2 do art.º 12.º-A do CIRS e pretende usufruir deste regime fiscal,</div>
<div class="t" style="left:777.60px;top:576.80px;font-size:6.5px;line-height:6.5px;color:#555;transform:scaleX(1.0232);transform-origin:0 0;">indique o ano em que se tornou residente em Portugal (2019 ou 2020)</div>
<div style="position:absolute;left:1192.50px;top:571.80px;width:71.00px;height:11.50px;box-sizing:border-box;border:1px solid #6a6a6a;background:#fff;"></div><div style="position:absolute;left:1192.50px;top:571.80px;width:13.30px;height:11.50px;box-sizing:border-box;border:1px solid #6a6a6a;background:#c9c9cb;"></div><div class="t" style="left:1194.10px;top:575.40px;font-size:6.5px;line-height:6.5px;font-weight:bold;color:#333;">12</div><div style="position:absolute;left:1219.90px;top:578.30px;width:0.80px;height:5.00px;background:#555;"></div><div style="position:absolute;left:1234.60px;top:578.30px;width:0.80px;height:5.00px;background:#555;"></div><div style="position:absolute;left:1249.10px;top:578.30px;width:0.80px;height:5.00px;background:#555;"></div>
<div style="position:absolute;left:772.00px;top:584.20px;width:540.50px;height:1.00px;background:#505050;"></div>
<div style="position:absolute;left:772.00px;top:584.70px;width:13.40px;height:12.60px;box-sizing:border-box;border:1px solid #505050;background:transparent;"></div>
<div class="t" style="left:776.50px;top:589.00px;font-size:6.5px;line-height:6.5px;font-weight:bold;color:#222;">D</div>
<div class="t" style="left:935.00px;top:587.47px;font-size:7px;line-height:7px;color:#444;transform:scaleX(1.0258);transform-origin:0 0;">REGIME FISCAL PREVISTO NOS N.ºs 9 E 10 DO ART.º 12.º DO CIRS</div>
<div style="position:absolute;left:772.00px;top:596.80px;width:540.50px;height:1.00px;background:#505050;"></div>
<div class="t" style="left:777.60px;top:604.50px;font-size:6.5px;line-height:6.5px;color:#555;transform:scaleX(1.0259);transform-origin:0 0;">Se reúne os pressupostos e condições previstas no n.º 9 do art.º 12.º do CIRS e pretende usufruir deste regime fiscal indique:</div>
<div class="t" style="left:786.80px;top:620.40px;font-size:6.5px;line-height:6.5px;color:#555;transform:scaleX(1.0232);transform-origin:0 0;">1 - Efetuou a comunicação prevista no n.º 10 do art.º 12.º do CIRS</div>
<div class="t" style="left:1012.30px;top:620.50px;font-size:6.5px;line-height:6.5px;color:#555;">Sim</div>
<div style="position:absolute;left:1028.50px;top:618.60px;width:25.50px;height:11.00px;box-sizing:border-box;border:1px solid #6a6a6a;background:#fff;"></div><div style="position:absolute;left:1028.50px;top:618.60px;width:12.50px;height:11.00px;box-sizing:border-box;border:1px solid #6a6a6a;background:#c9c9cb;"></div><div class="t" style="left:1030.10px;top:621.70px;font-size:6.5px;line-height:6.5px;font-weight:bold;color:#333;">13</div>
<div class="t" style="left:1070.80px;top:620.50px;font-size:6.5px;line-height:6.5px;color:#555;">Não</div>
<div style="position:absolute;left:1087.80px;top:618.50px;width:25.70px;height:11.10px;box-sizing:border-box;border:1px solid #6a6a6a;background:#fff;"></div><div style="position:absolute;left:1087.80px;top:618.50px;width:12.60px;height:11.10px;box-sizing:border-box;border:1px solid #6a6a6a;background:#c9c9cb;"></div><div class="t" style="left:1089.40px;top:621.70px;font-size:6.5px;line-height:6.5px;font-weight:bold;color:#333;">14</div>
<div class="t" style="left:1135.70px;top:629.50px;font-size:6.5px;line-height:6.5px;color:#555;transform:scaleX(1.0271);transform-origin:0 0;">NIF português</div>
<div class="t" style="left:1244.80px;top:629.50px;font-size:6.5px;line-height:6.5px;color:#555;transform:scaleX(1.0269);transform-origin:0 0;">Código do país</div>
<div class="t" style="left:795.70px;top:640.40px;font-size:6.5px;line-height:6.5px;color:#555;transform:scaleX(1.0215);transform-origin:0 0;">1.1 - Se assinalou "Não", identifique o estabelecimento de ensino que frequentou (ou o país)</div>
<div style="position:absolute;left:1085.70px;top:637.70px;width:130.90px;height:11.70px;box-sizing:border-box;border:1px solid #6a6a6a;background:#fff;"></div><div style="position:absolute;left:1085.70px;top:637.70px;width:13.30px;height:11.70px;box-sizing:border-box;border:1px solid #6a6a6a;background:#c9c9cb;"></div><div class="t" style="left:1087.30px;top:641.50px;font-size:6.5px;line-height:6.5px;font-weight:bold;color:#333;">15</div><div style="position:absolute;left:1111.70px;top:644.40px;width:0.80px;height:5.00px;background:#555;"></div><div style="position:absolute;left:1124.80px;top:644.40px;width:0.80px;height:5.00px;background:#555;"></div><div style="position:absolute;left:1137.90px;top:644.40px;width:0.80px;height:5.00px;background:#555;"></div><div style="position:absolute;left:1151.00px;top:644.40px;width:0.80px;height:5.00px;background:#555;"></div><div style="position:absolute;left:1164.10px;top:644.40px;width:0.80px;height:5.00px;background:#555;"></div><div style="position:absolute;left:1177.20px;top:644.40px;width:0.80px;height:5.00px;background:#555;"></div><div style="position:absolute;left:1190.30px;top:644.40px;width:0.80px;height:5.00px;background:#555;"></div><div style="position:absolute;left:1203.30px;top:644.40px;width:0.80px;height:5.00px;background:#555;"></div>
<div style="position:absolute;left:1231.30px;top:637.70px;width:65.50px;height:11.70px;box-sizing:border-box;border:1px solid #6a6a6a;background:#fff;"></div><div style="position:absolute;left:1231.30px;top:637.70px;width:13.10px;height:11.70px;box-sizing:border-box;border:1px solid #6a6a6a;background:#c9c9cb;"></div><div class="t" style="left:1232.90px;top:641.50px;font-size:6.5px;line-height:6.5px;font-weight:bold;color:#333;">16</div><div style="position:absolute;left:1257.10px;top:644.40px;width:0.80px;height:5.00px;background:#555;"></div><div style="position:absolute;left:1270.20px;top:644.40px;width:0.80px;height:5.00px;background:#555;"></div><div style="position:absolute;left:1283.30px;top:644.40px;width:0.80px;height:5.00px;background:#555;"></div>
<div style="position:absolute;left:772.00px;top:653.80px;width:540.50px;height:1.00px;background:#505050;"></div>
<div style="position:absolute;left:772.00px;top:657.40px;width:540.50px;height:242.60px;box-sizing:border-box;border:1px solid #505050;background:transparent;"></div>
<div style="position:absolute;left:785.40px;top:658.40px;width:526.10px;height:12.00px;background:#c9c9cb;"></div>
<div style="position:absolute;left:772.00px;top:657.40px;width:13.40px;height:13.50px;box-sizing:border-box;border:1px solid #505050;background:transparent;"></div>
<div class="t" style="left:776.50px;top:662.00px;font-size:6.5px;line-height:6.5px;font-weight:bold;color:#222;">4</div>
<div class="t" style="left:932.60px;top:660.57px;font-size:7px;line-height:7px;font-weight:bold;color:#333;transform:scaleX(1.0235);transform-origin:0 0;white-space:pre;">RENDIMENTOS BRUTOS  (OBTIDOS EM TERRITÓRIO PORTUGUÊS)</div>
<div style="position:absolute;left:772.00px;top:669.90px;width:540.50px;height:1.00px;background:#505050;"></div>
<div style="position:absolute;left:772.00px;top:670.40px;width:13.40px;height:12.60px;box-sizing:border-box;border:1px solid #505050;background:transparent;"></div>
<div class="t" style="left:776.50px;top:675.00px;font-size:6.5px;line-height:6.5px;font-weight:bold;color:#222;">A</div>
<div class="t" style="left:884.00px;top:672.87px;font-size:7px;line-height:7px;color:#444;transform:scaleX(1.0257);transform-origin:0 0;">RENDIMENTOS PROFISSIONAIS, COMERCIAIS E INDUSTRIAIS</div>
<div style="position:absolute;left:1195.80px;top:670.40px;width:1.00px;height:12.60px;background:#505050;"></div>
<div class="t" style="left:1243.00px;top:673.07px;font-size:7px;line-height:7px;color:#444;transform:scaleX(0.9909);transform-origin:0 0;">VALOR</div>
<div style="position:absolute;left:772.00px;top:682.20px;width:540.50px;height:1.00px;background:#505050;"></div>
<div class="t" style="left:777.60px;top:685.70px;font-size:6.5px;line-height:6.5px;color:#555;transform:scaleX(0.9662);transform-origin:0 0;">Vendas de mercadorias e produtos</div>
<div style="position:absolute;left:1178.50px;top:683.20px;width:17.10px;height:13.10px;background:#c9c9cb;border-left:1px solid #777;border-right:1px solid #777;box-sizing:border-box;"></div>
<div class="t" style="left:1182.00px;top:687.30px;font-size:6.5px;line-height:6.5px;font-weight:bold;color:#333;">401</div>
<div class="t" style="left:1293.00px;top:684.16px;font-size:9.5px;line-height:9.5px;color:#111;transform:scaleX(1.0007);transform-origin:0 0;">0,00</div>
<div style="position:absolute;left:772.00px;top:695.80px;width:540.50px;height:1.00px;background:#505050;"></div>
<div class="t" style="left:777.60px;top:699.50px;font-size:6.5px;line-height:6.5px;color:#555;transform:scaleX(1.0253);transform-origin:0 0;">Prestações de serviços de atividades hoteleiras e similares, restauração e bebidas - anos 2015 e 2016</div>
<div style="position:absolute;left:1178.50px;top:696.80px;width:17.10px;height:13.50px;background:#c9c9cb;border-left:1px solid #777;border-right:1px solid #777;box-sizing:border-box;"></div>
<div class="t" style="left:1182.00px;top:701.30px;font-size:6.5px;line-height:6.5px;font-weight:bold;color:#333;">402</div>
<div class="t" style="left:1293.00px;top:697.96px;font-size:9.5px;line-height:9.5px;color:#111;transform:scaleX(1.0007);transform-origin:0 0;">0,00</div>
<div style="position:absolute;left:772.00px;top:709.80px;width:540.50px;height:1.00px;background:#505050;"></div>
<div class="t" style="left:777.60px;top:713.10px;font-size:6.5px;line-height:6.5px;color:#555;transform:scaleX(1.0271);transform-origin:0 0;">Prestações de serviços de atividades de restauração e bebidas</div>
<div style="position:absolute;left:1178.50px;top:710.80px;width:17.10px;height:13.10px;background:#c9c9cb;border-left:1px solid #777;border-right:1px solid #777;box-sizing:border-box;"></div>
<div class="t" style="left:1182.00px;top:714.90px;font-size:6.5px;line-height:6.5px;font-weight:bold;color:#333;">415</div>
<div class="t" style="left:1293.00px;top:711.56px;font-size:9.5px;line-height:9.5px;color:#111;transform:scaleX(1.0007);transform-origin:0 0;">0,00</div>
<div style="position:absolute;left:772.00px;top:723.40px;width:540.50px;height:1.00px;background:#505050;"></div>
<div class="t" style="left:777.60px;top:726.70px;font-size:6.5px;line-height:6.5px;color:#555;transform:scaleX(1.0249);transform-origin:0 0;">Prestações de serviços de atividades hoteleiras e similares</div>
<div style="position:absolute;left:1178.50px;top:724.40px;width:17.10px;height:13.10px;background:#c9c9cb;border-left:1px solid #777;border-right:1px solid #777;box-sizing:border-box;"></div>
<div class="t" style="left:1182.00px;top:728.50px;font-size:6.5px;line-height:6.5px;font-weight:bold;color:#333;">416</div>
<div class="t" style="left:1293.00px;top:725.16px;font-size:9.5px;line-height:9.5px;color:#111;transform:scaleX(1.0007);transform-origin:0 0;">0,00</div>
<div style="position:absolute;left:772.00px;top:737.00px;width:540.50px;height:1.00px;background:#505050;"></div>
<div class="t" style="left:777.60px;top:740.30px;font-size:6.5px;line-height:6.5px;color:#555;transform:scaleX(1.0101);transform-origin:0 0;">Prestações de serviços de atividades hoteleiras e similares, restauração e bebidas - anos 2017 e seguintes</div>
<div style="position:absolute;left:1178.50px;top:738.00px;width:17.10px;height:13.10px;background:#c9c9cb;border-left:1px solid #777;border-right:1px solid #777;box-sizing:border-box;"></div>
<div class="t" style="left:1182.00px;top:742.10px;font-size:6.5px;line-height:6.5px;font-weight:bold;color:#333;">417</div>
<div class="t" style="left:1293.00px;top:738.76px;font-size:9.5px;line-height:9.5px;color:#111;transform:scaleX(1.0007);transform-origin:0 0;">0,00</div>
<div style="position:absolute;left:772.00px;top:750.60px;width:540.50px;height:1.00px;background:#505050;"></div></div></div>
<div style="position:absolute;left:0.00px;top:839.00px;width:1440.00px;height:21.00px;background:linear-gradient(#48494c 0px,#46474a 7px,#3a3a3c 8px,#39393b 21px);"></div>
<div style="position:absolute;left:0.00px;top:860.00px;width:1440.00px;height:4.00px;background:#161616;"></div>
<div style="position:absolute;left:442.00px;top:860.00px;width:48.00px;height:4.00px;background:#2c2c2e;"></div>
<div style="position:absolute;left:102.00px;top:841.00px;width:1.00px;height:16.00px;background:repeating-linear-gradient(#1c1c1e 0 2px,#505256 2px 3px);"></div>
<div style="position:absolute;left:385.00px;top:841.00px;width:1.00px;height:16.00px;background:repeating-linear-gradient(#1c1c1e 0 2px,#505256 2px 3px);"></div>
<div style="position:absolute;left:509.00px;top:841.00px;width:1.00px;height:16.00px;background:repeating-linear-gradient(#1c1c1e 0 2px,#505256 2px 3px);"></div>
<div style="position:absolute;left:543.50px;top:841.00px;width:1.00px;height:16.00px;background:repeating-linear-gradient(#1c1c1e 0 2px,#505256 2px 3px);"></div>
<div style="position:absolute;left:575.60px;top:841.00px;width:1.00px;height:16.00px;background:repeating-linear-gradient(#1c1c1e 0 2px,#505256 2px 3px);"></div>
<div style="position:absolute;left:604.60px;top:841.00px;width:1.00px;height:16.00px;background:repeating-linear-gradient(#1c1c1e 0 2px,#505256 2px 3px);"></div>
<div class="t" style="left:4.00px;top:844.77px;font-size:11.5px;line-height:11.5px;color:#ececec;transform:scaleX(0.9627);transform-origin:0 0;">GRB.32 v10.0.0.7</div>
<div class="t" style="left:107.00px;top:844.77px;font-size:11.5px;line-height:11.5px;color:#ececec;transform:scaleX(0.9294);transform-origin:0 0;">Demonstração</div>
<div class="t" style="left:391.00px;top:844.77px;font-size:11.5px;line-height:11.5px;color:#ececec;transform:scaleX(0.9321);transform-origin:0 0;">1 (10)</div>
<div class="t" style="left:513.00px;top:844.77px;font-size:11.5px;line-height:11.5px;color:#8c8c8e;transform:scaleX(0.8302);transform-origin:0 0;">CAPS</div>
<div class="t" style="left:547.00px;top:844.77px;font-size:11.5px;line-height:11.5px;color:#ececec;transform:scaleX(0.9164);transform-origin:0 0;">NUM</div>
<div class="t" style="left:582.00px;top:844.77px;font-size:11.5px;line-height:11.5px;color:#8c8c8e;transform:scaleX(0.9128);transform-origin:0 0;">INS</div>
<div class="t" style="left:609.00px;top:844.77px;font-size:11.5px;line-height:11.5px;color:#ececec;transform:scaleX(0.9340);transform-origin:0 0;">LOCAL sessão:6 utilizador:fatima</div>
</body></html>
